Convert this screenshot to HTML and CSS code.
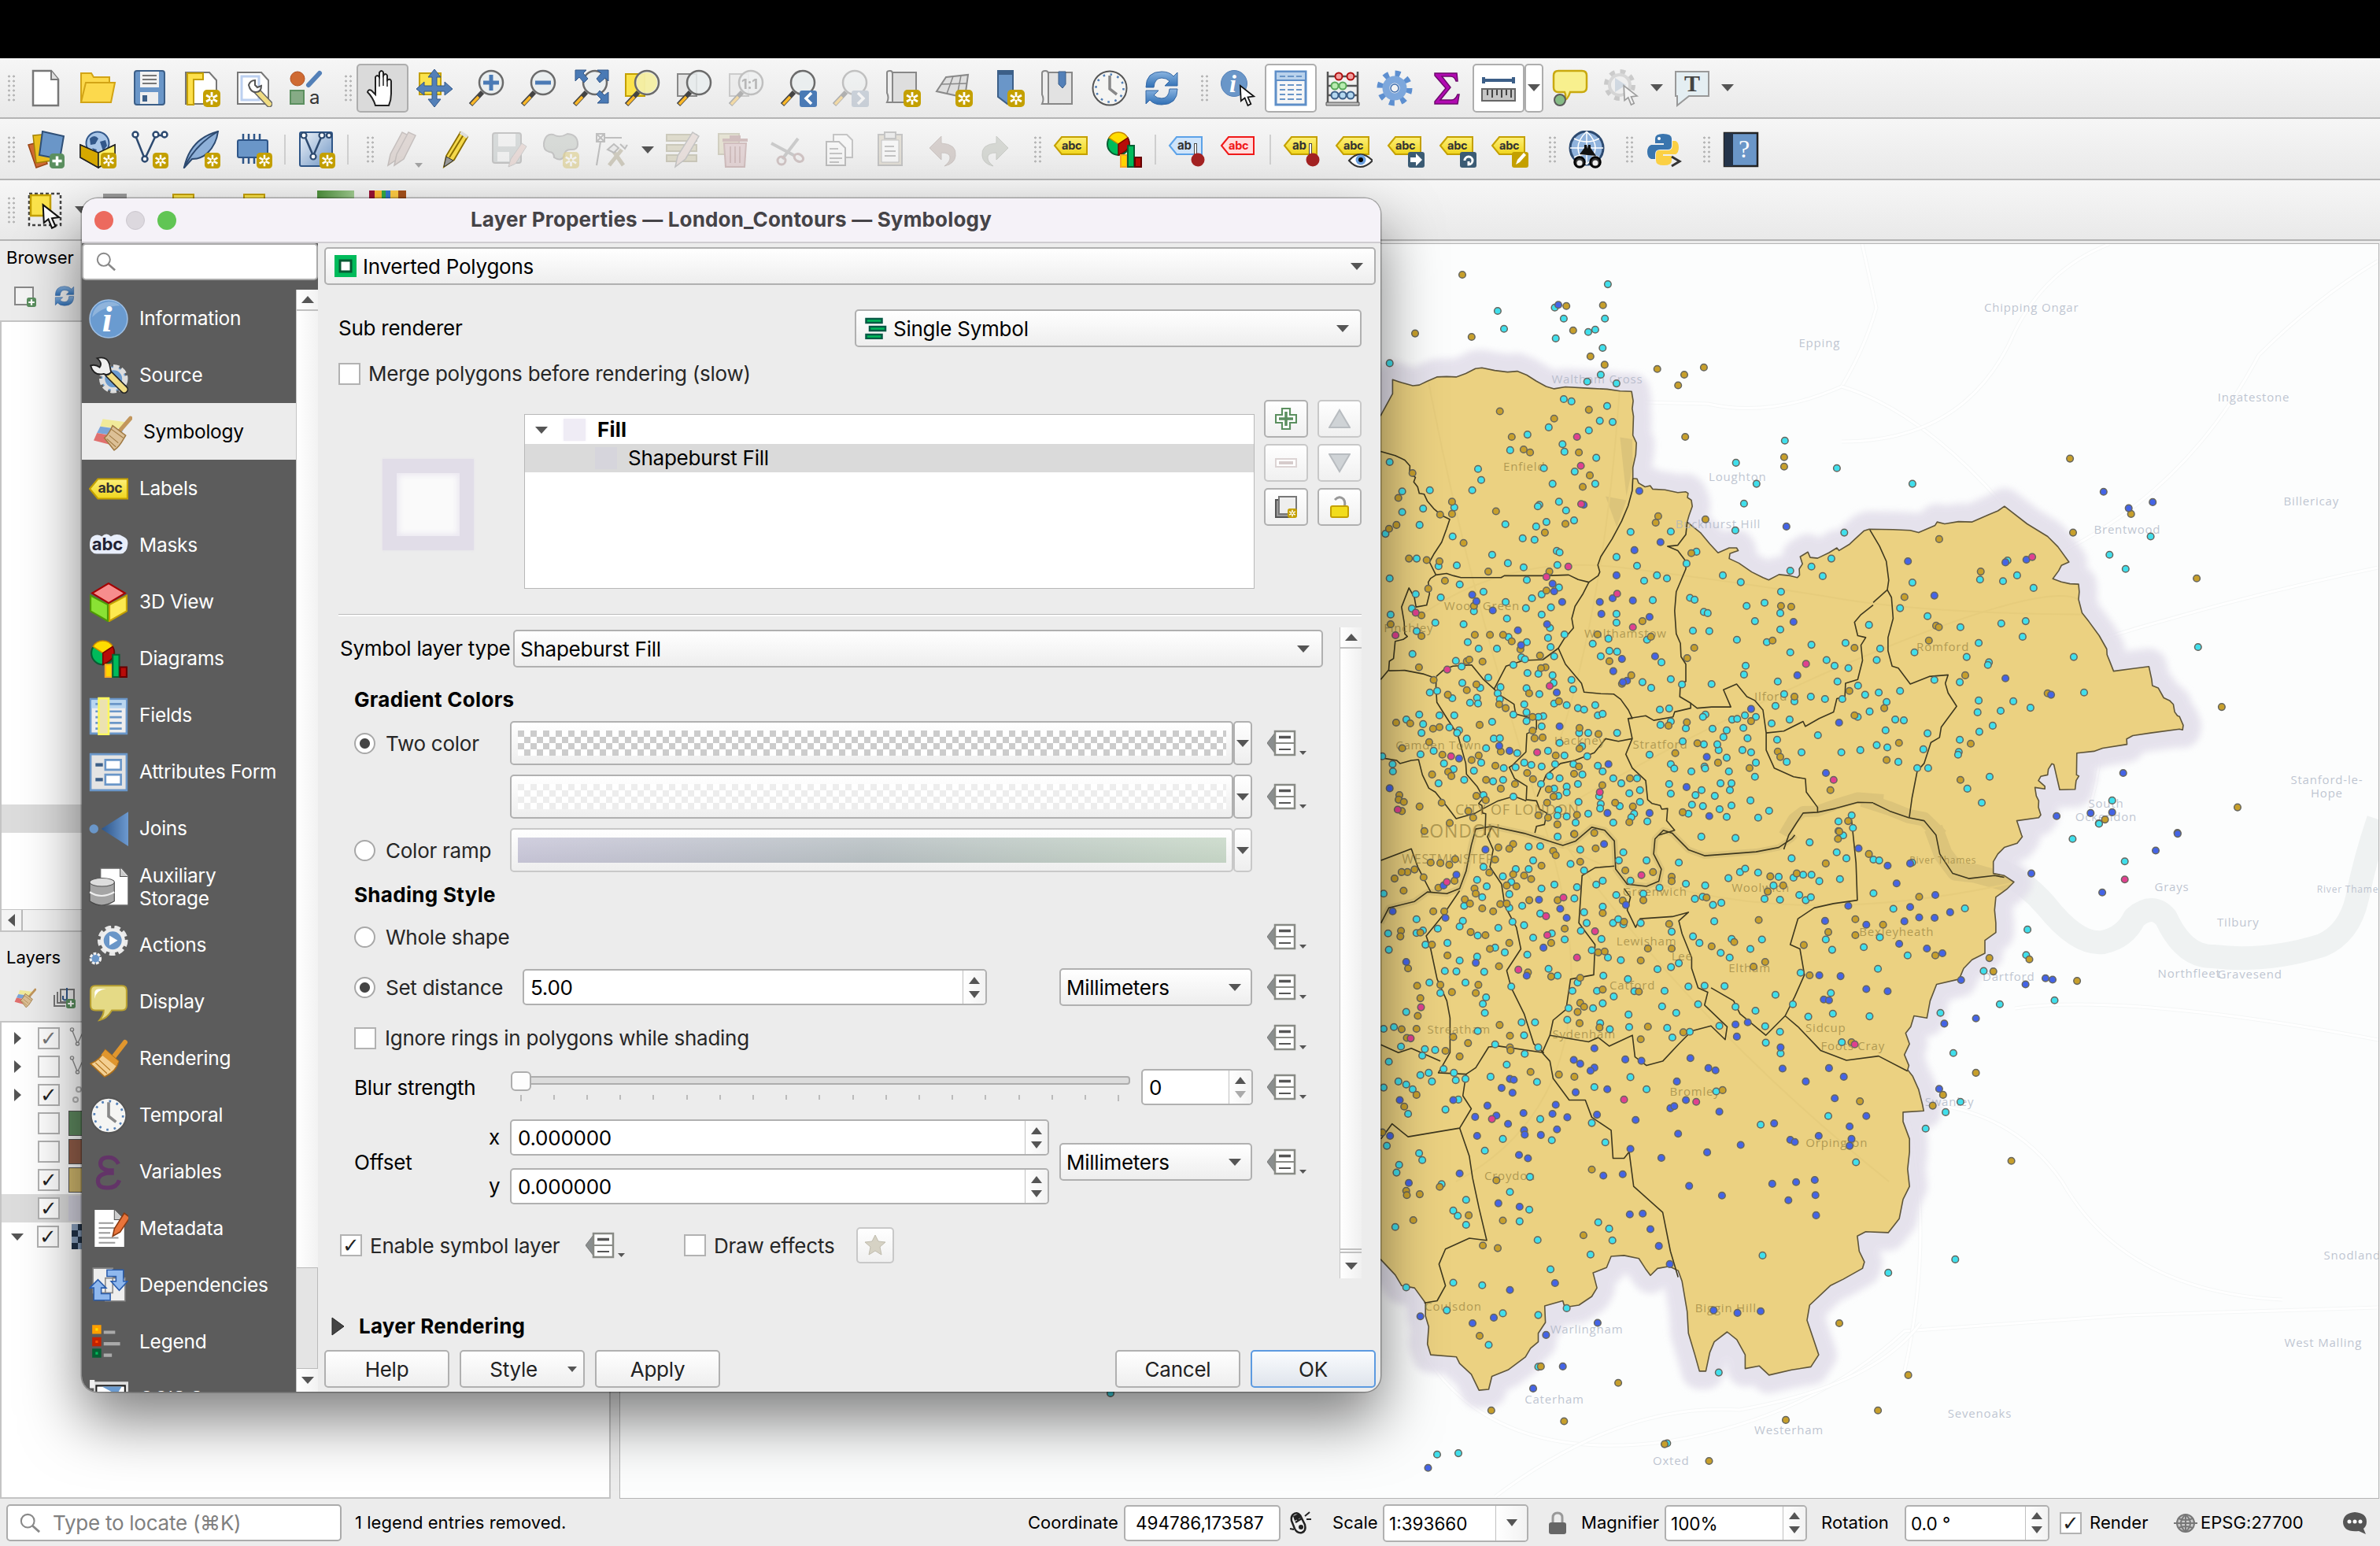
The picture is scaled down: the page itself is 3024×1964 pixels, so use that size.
FILE: index.html
```html
<!DOCTYPE html>
<html lang="en">
<head>
<meta charset="utf-8">
<title>Layer Properties — London_Contours — Symbology</title>
<link rel="stylesheet" href="styles.css">
</head>
<body>
<svg class="defs" width="0" height="0">
  <defs>
    <linearGradient id="gYel" x2="0" y2="1"><stop stop-color="#fdf07a"/><stop offset="1" stop-color="#f0d51c"/></linearGradient>
    <linearGradient id="gBlu" x2="0" y2="1"><stop stop-color="#8ab4e0"/><stop offset="1" stop-color="#2f6fb5"/></linearGradient>
    <linearGradient id="gPale" x2="1" y2="1"><stop stop-color="#eef3f9"/><stop offset="1" stop-color="#6e95c4"/></linearGradient>
    <linearGradient id="gJoin"><stop stop-color="#2c5488"/><stop offset="1" stop-color="#6d9ad0"/></linearGradient>
  </defs>
</svg>
<svg class="sprites">
  <symbol id="badge" viewBox="0 0 22 22"><rect width="22" height="22" rx="5" fill="#c4a000"/><path d="M11 3v16M4 7l14 8M4 15l14-8" stroke="#fff" stroke-width="2.800"/><circle cx="11" cy="11" r="2" fill="#c4a000"/></symbol>
  <symbol id="plusb" viewBox="0 0 22 22"><rect width="22" height="22" rx="5" fill="#5b8f5f"/><path d="M11 4v14M4 11h14" stroke="#fff" stroke-width="4"/></symbol>
  <symbol id="lens" viewBox="0 0 48 48"><path d="M19 29L4 45" stroke="#444" stroke-width="6"/><path d="M14 35L5 44.500" stroke="#fbb829" stroke-width="3.500"/><circle cx="30" cy="17" r="15" fill="#e9edee" fill-opacity=".85" stroke="#6b6b6b" stroke-width="2.500"/></symbol>
  <symbol id="new" viewBox="0 0 48 48"><path d="M8 2h23l9 11v33H8z" fill="#fff" stroke="#777" stroke-width="2.500"/><path d="M31 2v11h9" fill="#ddd" stroke="#777" stroke-width="2"/></symbol>
  <symbol id="open" viewBox="0 0 48 48"><path d="M3 42V5h13l3 5h20v9" fill="#fcd94c" stroke="#d2a416" stroke-width="2"/><path d="M3 42L9 17h37l-5 25z" fill="#fcd94c" stroke="#d2a416" stroke-width="2"/></symbol>
  <symbol id="save" viewBox="0 0 48 48"><rect x="5" y="2" width="38" height="43" rx="3" fill="#6a96c8" stroke="#3c5f88" stroke-width="2"/><path d="M12 3h24v20H12z" fill="#f2f2f2"/><path d="M15 8h18M15 13h18M15 18h18" stroke="#777" stroke-width="2"/><path d="M12 29h23v15H12z" fill="#eee"/><path d="M15 33h6v8h-6z" fill="#3c5f88"/></symbol>
  <symbol id="layout" viewBox="0 0 48 48"><path d="M4 4h30l9 10v30H4z" fill="#fff" stroke="#777" stroke-width="2"/><path d="M6 5h20v8H14v32H6z" fill="#fde04c" stroke="#c4a000" stroke-width="2"/><use href="#badge" x="26" y="26" width="22" height="22"/></symbol>
  <symbol id="layman" viewBox="0 0 48 48"><path d="M4 4h30l9 10v30H4z" fill="#fff" stroke="#777" stroke-width="2"/><path d="M9 9h22v30H9z" fill="none" stroke="#bcd0f0" stroke-width="3"/><path d="M26 25L44 44" stroke="#666" stroke-width="9" stroke-linecap="round"/><path d="M28 27L44 44" stroke="#f0dc82" stroke-width="6" stroke-linecap="round"/><path d="M18 20q2-6 8-6v6l3 3 5-2q0 8-7 8t-9-9z" fill="#fff" stroke="#555" stroke-width="2"/></symbol>
  <symbol id="style" viewBox="0 0 48 48"><circle cx="14" cy="12" r="9" fill="#cf6a32" stroke="#b05020"/><path d="M28 20L42 5" stroke="#5380b8" stroke-width="6" stroke-linecap="round"/><path d="M5 27h17v17H5z" fill="#86ab86" stroke="#5b8f5f" stroke-width="2"/><text x="29" y="44" font-size="24" fill="#333">a</text></symbol>
  <symbol id="hand" viewBox="0 0 48 48"><path d="M15 46q-3-10-10-17 1-4 5-2l5 5V10q2-4 5 0V4q3-4 5 0v4q3-4 5 0v6q4-3 5 1v16q0 8-3 15z" fill="#fff" stroke="#222" stroke-width="2"/><path d="M20 10v12M25 8v13M30 11v11" stroke="#222" stroke-width="1.500"/></symbol>
  <symbol id="panall" viewBox="0 0 48 48"><path d="M5 5h27v27H5z" fill="#fbe34b" stroke="#c4a000" stroke-width="2"/><path d="M24 0l8 10h-5v11h10v-5l10 9-10 8v-5H27v10h5l-8 10-8-10h5V28H11v5L1 25l10-9v5h10V10h-5z" fill="#5380b8" stroke="#33588a"/></symbol>
  <symbol id="zin" viewBox="0 0 48 48"><use href="#lens"/><path d="M30 7v20M20 17h20" stroke="#4a7ab5" stroke-width="5"/></symbol>
  <symbol id="zout" viewBox="0 0 48 48"><use href="#lens"/><path d="M20 17h20" stroke="#4a7ab5" stroke-width="5"/></symbol>
  <symbol id="zfull" viewBox="0 0 48 48"><use href="#lens"/><path d="M5 1h14l-4 4 6 7-5 5-6-7-5 5zM47 1v14l-4-4-7 6-4-5 6-7-5-4zM47 43V29l-5 4-6-6-4 5 6 6-5 5z" fill="#4a7ab5" stroke="#33588a"/></symbol>
  <symbol id="zsel" viewBox="0 0 48 48"><path d="M3 6h24v28H3z" fill="#fbe34b" stroke="#c4a000" stroke-width="2"/><use href="#lens"/><circle cx="30" cy="17" r="13" fill="#f8ef8c" fill-opacity=".7"/></symbol>
  <symbol id="zlay" viewBox="0 0 48 48"><path d="M3 6h24v28H3z" fill="#e4e4e4" stroke="#888" stroke-width="2"/><use href="#lens"/></symbol>
  <symbol id="z11" viewBox="0 0 48 48"><use href="#zlay"/><text x="18" y="25" font-size="18" font-weight="700" fill="#555">1:1</text></symbol>
  <symbol id="zlast" viewBox="0 0 48 48"><use href="#lens"/><rect x="26" y="27" width="22" height="21" rx="3" fill="#4a7ab5"/><path d="M41 30l-7 7 7 7" fill="none" stroke="#fff" stroke-width="3.500"/></symbol>
  <symbol id="znext" viewBox="0 0 48 48"><use href="#lens"/><rect x="26" y="27" width="22" height="21" rx="3" fill="#8a9cb2"/><path d="M34 30l7 7-7 7" fill="none" stroke="#fff" stroke-width="3.500"/></symbol>
  <symbol id="mapv" viewBox="0 0 48 48"><path d="M12 4h30v38H12z" fill="#dedede" stroke="#888" stroke-width="2"/><path d="M12 42H5q3-6 0-12V4q0-2 4-2 3 0 3 4z" fill="#eee" stroke="#888" stroke-width="2"/><use href="#badge" x="26" y="26" width="22" height="22"/></symbol>
  <symbol id="map3" viewBox="0 0 48 48"><path d="M14 10l28-3-4 29-36-8z" fill="#dedede" stroke="#888" stroke-width="2"/><path d="M8 19l33-1M23 9l-8 22M33 8l-5 26" stroke="#888" stroke-width="1.500"/><use href="#badge" x="26" y="26" width="22" height="22"/></symbol>
  <symbol id="bmnew" viewBox="0 0 48 48"><path d="M14 2h19v33l-7 9-12-9z" fill="#6a96c8" stroke="#3c5f88" stroke-width="2"/><path d="M14 2h19v5H14z" fill="#3c5f88"/><use href="#badge" x="26" y="26" width="22" height="22"/></symbol>
  <symbol id="bm" viewBox="0 0 48 48"><path d="M12 4h30v40H12z" fill="#e2e2e2" stroke="#888" stroke-width="2"/><path d="M12 44H4q3-6 0-12V5q0-3 4-3 4 0 4 4z" fill="#eee" stroke="#888" stroke-width="2"/><path d="M25 3h9v16l-4 5-5-5z" fill="#5380b8" stroke="#3c5f88"/></symbol>
  <symbol id="clock" viewBox="0 0 48 48"><circle cx="24" cy="24" r="21.500" fill="#f5f5f3" stroke="#555" stroke-width="2"/><circle cx="24" cy="24" r="17.500" fill="none" stroke="#5380b8" stroke-width="2.600" stroke-dasharray="2.600 6.560"/><path d="M24 8v17l9 7" fill="none" stroke="#888" stroke-width="3.500"/></symbol>
  <symbol id="refresh" viewBox="0 0 48 48"><path d="M4 23Q4 3 24 3q10 0 15 6l5-5v17H28l6-6q-4-4-10-4-9 0-10 12z" fill="url(#gBlu)" stroke="#3568a5"/><path d="M44 25q0 20-20 20-10 0-15-6l-5 5V27h16l-6 6q4 4 10 4 9 0 10-12z" fill="url(#gBlu)" stroke="#3568a5"/></symbol>
  <symbol id="cursor" viewBox="0 0 24 30"><path d="M2 2l1 20 5-4 4 10 4-2-4-9 8-1z" fill="#fff" stroke="#111" stroke-width="1.800"/></symbol>
  <symbol id="ident" viewBox="0 0 48 48"><circle cx="18" cy="18" r="16.500" fill="#6a96c8" stroke="#5380b8"/><text x="12" y="29" font-family="Liberation Serif" font-style="italic" font-weight="700" font-size="32" fill="#fff">i</text><use href="#cursor" x="23" y="19" width="25" height="29"/></symbol>
  <symbol id="table" viewBox="0 0 48 48"><path d="M5 3h38v42H5z" fill="#f6f6f6" stroke="#5f8fc8" stroke-width="3"/><path d="M6 4h36v10H6z" fill="#b9d2ec"/><path d="M5 14h38" stroke="#5f8fc8" stroke-width="2"/><path d="M10 9h7m3 0h8m3 0h7M10 20h7m3 0h8m3 0h7M10 26h7m3 0h8m3 0h7M10 32h7m3 0h8m3 0h7M10 38h7m3 0h8m3 0h7" stroke="#6a96c8" stroke-width="2.200"/></symbol>
  <symbol id="abac" viewBox="0 0 48 48"><path d="M5 3v39M43 3v39M5 9h38M5 21h38M5 33h38" stroke="#555" stroke-width="2.500"/><path d="M3 42h42v4H3z" fill="#bbb" stroke="#555"/><g stroke-width="2"><g fill="#f4a0a0" stroke="#b01010"><circle cx="19" cy="9" r="4.500"/><circle cx="34" cy="9" r="4.500"/></g><g fill="#b9ecb0" stroke="#58a858"><circle cx="14" cy="21" r="4.500"/><circle cx="24" cy="21" r="4.500"/></g><g fill="#b5d8f0" stroke="#3c5f88"><circle cx="14" cy="33" r="4.500"/><circle cx="24" cy="33" r="4.500"/><circle cx="34" cy="33" r="4.500"/></g></g></symbol>
  <symbol id="gear" viewBox="0 0 48 48"><circle cx="24" cy="24" r="17" fill="none" stroke="#5d8fd0" stroke-width="11" stroke-dasharray="6 7.350"/><circle cx="24" cy="24" r="11" fill="#f2f2f2" stroke="#7da7dc" stroke-width="9"/><circle cx="24" cy="24" r="5" fill="#f2f2f2" stroke="#3d6eb0" stroke-width="1.500"/></symbol>
  <symbol id="sigma" viewBox="0 0 48 48"><path d="M9 5h28l1 10h-2q-2-6-7-6H18l11 14-13 16h14q5 0 8-7h2l-2 12H9v-3l14-17L9 8z" fill="#b20ab2" stroke="#6d0a6d" stroke-width="1.500"/></symbol>
  <symbol id="ruler" viewBox="0 0 48 48"><path d="M5 14h38M5 10v8M43 10v8" stroke="#3c5f88" stroke-width="4"/><path d="M3 25h42v15H3z" fill="#c6c6c6" stroke="#666" stroke-width="2"/><path d="M10 26v7m6-7v10m6-10v7m6-7v10m6-10v7m6-7v10" stroke="#444" stroke-width="2"/></symbol>
  <symbol id="tip" viewBox="0 0 48 48"><path d="M10 2h30q6 0 6 6v15q0 6-6 6H25q-3 10-9 11 5-5 2-11h-8q-6 0-6-6V8q0-6 6-6z" fill="#f8f08e" stroke="#c9a90f" stroke-width="2.500"/><circle cx="12" cy="39" r="7" fill="#86bb86" stroke="#5a5a5a" stroke-width="2"/></symbol>
  <symbol id="gplay" viewBox="0 0 48 48"><circle cx="22" cy="20" r="17" fill="none" stroke="#888" stroke-width="6" stroke-dasharray="6.600 6.750"/><circle cx="22" cy="20" r="13" fill="#eee" stroke="#aaa" stroke-width="4"/><path d="M16 11l14 9-14 9z" fill="#9ab0c8"/><use href="#cursor" x="25" y="19" width="23" height="28"/></symbol>
  <symbol id="tann" viewBox="0 0 48 48"><path d="M3 3h42v31H20L5 46V34H3z" fill="#e4eef2" stroke="#999" stroke-width="2"/><text x="14" y="28" font-family="Liberation Serif" font-weight="700" font-size="30" fill="#444">T</text></symbol>
  <symbol id="dsman" viewBox="0 0 48 48"><path d="M2 18l16-4 8 28-14 5z" fill="#cf6a32" stroke="#9a4515" stroke-width="1.500"/><path d="M8 6l22-2 2 34-20 3z" fill="#e8be1e" stroke="#a07f06" stroke-width="1.500"/><path d="M20 1l27 6-5 29-26-5z" fill="#6a96c8" stroke="#2f4f76" stroke-width="2"/><use href="#plusb" x="29" y="29" width="19" height="19"/></symbol>
  <symbol id="gpkg" viewBox="0 0 48 48"><path d="M2 18l23 10v19L2 34z" fill="#d6a800" stroke="#222" stroke-width="1.500"/><path d="M46 18L25 28v19l21-13z" fill="#fff06a" stroke="#222" stroke-width="1.500"/><circle cx="24" cy="16" r="14.500" fill="#a9c6e8" stroke="#33588a" stroke-width="2"/><path d="M14 10q6-6 11 0l-4 7-6 1zM27 14l7-2 2 7-5 7zM17 22l6 2-2 5z" fill="#33588a"/><path d="M2 18l23 10v19L2 34z" fill="#d6a800" stroke="#222" stroke-width="1.500"/><path d="M46 18L25 28v19l21-13z" fill="#fff06a" stroke="#222" stroke-width="1.500"/><use href="#badge" x="28" y="28" width="20" height="20"/></symbol>
  <symbol id="vnew" viewBox="0 0 48 48"><path d="M6 6l12 30L32 6h10" fill="none" stroke="#2d4a70" stroke-width="2.500"/><g fill="#fff" stroke="#2d4a70" stroke-width="2.500"><circle cx="6" cy="5" r="3.500"/><circle cx="18" cy="36" r="3.500"/><circle cx="32" cy="5" r="3.500"/><circle cx="43" cy="5" r="3.500"/></g></symbol>
  <symbol id="vn" viewBox="0 0 48 48"><use href="#vnew"/><use href="#badge" x="28" y="28" width="20" height="20"/></symbol>
  <symbol id="feather" viewBox="0 0 48 48"><path d="M2 47Q10 10 45 1q-2 16-13 27-8 8-20 8z" fill="#8eb0d8" stroke="#2d4a70" stroke-width="2"/><path d="M2 47Q16 18 45 1" fill="none" stroke="#2d4a70" stroke-width="2"/><use href="#badge" x="28" y="28" width="20" height="20"/></symbol>
  <symbol id="chip" viewBox="0 0 48 48"><path d="M11 4v38M18 4v38M25 4v38M32 4v38" stroke="#2f5688" stroke-width="2.500"/><rect x="4" y="12" width="38" height="22" rx="2" fill="#6a96c8" stroke="#2f5688" stroke-width="2"/><use href="#badge" x="28" y="28" width="20" height="20"/></symbol>
  <symbol id="virt" viewBox="0 0 48 48"><rect x="3" y="2" width="41" height="43" rx="2" fill="url(#gPale)" stroke="#2f5688" stroke-width="2"/><path d="M8 4l12 28L32 4M40 4v4" fill="none" stroke="#2d4a70" stroke-width="2.500"/><g fill="#fff" stroke="#2d4a70" stroke-width="2.200"><circle cx="8" cy="6" r="3.500"/><circle cx="20" cy="33" r="3.500"/><circle cx="31" cy="6" r="3.500"/><circle cx="40" cy="6" r="3"/></g><use href="#badge" x="28" y="28" width="20" height="20"/></symbol>
  <symbol id="pencil" viewBox="0 0 48 48"><path d="M8 46l3-14L29 2l9 6-17 29z" fill="#f5d94b" stroke="#8a6d00" stroke-width="1.800"/><path d="M15 34L33 5" stroke="#8a6d00" stroke-width="2"/><path d="M8 46l3-13 9 5z" fill="#999" stroke="#333"/><path d="M29 2l9 6" stroke="#ddd" stroke-width="4"/></symbol>
  <symbol id="pencils" viewBox="0 0 48 48"><g fill="#c0aaa2" stroke="#7a6a66" stroke-width="1.500"><path d="M3 44l3-14L21 2l8 4-14 30z"/><path d="M11 44l3-14L29 2l9 4-15 30z"/></g><path d="M37 41h10l-5 6z" fill="#222"/></symbol>
  <symbol id="saved" viewBox="0 0 48 48"><rect x="4" y="3" width="36" height="38" rx="3" fill="#a9b2b2" stroke="#777" stroke-width="2"/><path d="M11 4h22v16H11zM10 27h15v12H10z" fill="#eee"/><path d="M24 46l3-10 14-20 6 4-14 22z" fill="#d8b4ac" stroke="#888"/></symbol>
  <symbol id="poly" viewBox="0 0 48 48"><path d="M3 16Q5 3 15 5q8 5 18-1 13 1 13 13 0 8-9 7-8 0-8 8-4 8-13 2 0-7-6-7-8-2-7-11z" fill="#aab2aa" stroke="#777" stroke-width="2"/><g opacity=".7"><use href="#badge" x="27" y="27" width="21" height="21"/></g></symbol>
  <symbol id="vert" viewBox="0 0 48 48"><path d="M4 4h10v10H4zM4 4l10 10M14 4L4 14M14 9h22M9 14L4 44" fill="none" stroke="#666" stroke-width="2"/><path d="M20 44l16-20M38 44L24 24" stroke="#958a68" stroke-width="5"/><path d="M18 24l8-7 6 5-6 6zM34 17l6 6 3-5" fill="#ddd" stroke="#666" stroke-width="2"/></symbol>
  <symbol id="mod" viewBox="0 0 48 48"><path d="M3 5h38v8H3zM3 18h38v8H3zM3 31h38v8H3z" fill="#bdb58c" stroke="#8a845e" stroke-width="2"/><path d="M14 46l3-14L36 2l8 5-17 29z" fill="#d8c0b8" stroke="#777" stroke-width="1.500"/></symbol>
  <symbol id="trash" viewBox="0 0 48 48"><path d="M3 4h26v26H3z" fill="#cfc79e" stroke="#9a946e" stroke-width="2"/><path d="M10 16h28l-2 30H12z" fill="#cba2a6" stroke="#966" stroke-width="2"/><path d="M8 12h32M17 8h14" stroke="#966" stroke-width="4"/><path d="M18 20v21m6-21v21m6-21v21" stroke="#966" stroke-width="2"/></symbol>
  <symbol id="cut" viewBox="0 0 48 48"><path d="M4 16l30 16M38 10L18 36" stroke="#888" stroke-width="4"/><ellipse cx="39" cy="34" rx="6" ry="4.500" transform="rotate(30 38 34)" fill="none" stroke="#977" stroke-width="3"/><ellipse cx="17" cy="38" rx="5" ry="5" fill="none" stroke="#977" stroke-width="3"/></symbol>
  <symbol id="copy" viewBox="0 0 48 48"><path d="M17 5h17l7 7v22H17z" fill="#fff" stroke="#777" stroke-width="2"/><path d="M8 14h16l8 8v22H8z" fill="#fff" stroke="#666" stroke-width="2"/><path d="M12 23h11M12 29h16M12 35h16M12 40h12" stroke="#777" stroke-width="2"/></symbol>
  <symbol id="paste" viewBox="0 0 48 48"><path d="M8 5h30v39H8z" fill="#c9bfa8" stroke="#777" stroke-width="2"/><path d="M12 12h22v28H12z" fill="#fff" stroke="#777"/><path d="M16 2h14v8H16z" fill="#ddd" stroke="#777" stroke-width="2"/><path d="M16 20h12M16 26h14M16 32h14" stroke="#777" stroke-width="2"/></symbol>
  <symbol id="undo" viewBox="0 0 48 48"><path d="M7 22L22 7v9q20 1 18 16-1 10-14 13 8-6 7-12-1-5-11-5v9z" fill="#a8958e" stroke="#8a7872"/></symbol>
  <symbol id="redo" viewBox="0 0 48 48"><path d="M41 22L26 7v9Q6 17 8 32q1 10 14 13-8-6-7-12 1-5 11-5v9z" fill="#a6aca0" stroke="#868c80"/></symbol>
  <symbol id="lab" viewBox="0 0 48 48"><path d="M2 19L11 8h32v22H11z" fill="url(#gYel)" stroke="#c4a000" stroke-width="2"/><text x="11" y="24" font-size="14.500" font-weight="700" fill="#333">abc</text></symbol>
  <symbol id="labb" viewBox="0 0 48 48"><path d="M2 19L11 8h32v22H11z" fill="#cfe4fa" stroke="#5ca2e8" stroke-width="2"/><text x="12" y="24" font-size="15" font-weight="700" fill="#333">ab</text><path d="M35 16v16" stroke="#444" stroke-width="4"/><path d="M35 17v14" stroke="#fff" stroke-width="2"/><circle cx="38" cy="37" r="8.500" fill="#a32222"/></symbol>
  <symbol id="labr" viewBox="0 0 48 48"><path d="M2 19L11 8h32v22H11z" fill="#fdd" stroke="#f01818" stroke-width="2"/><text x="11" y="24" font-size="14.500" font-weight="700" fill="#f01818">abc</text></symbol>
  <symbol id="labpin" viewBox="0 0 48 48"><path d="M2 19L11 8h32v22H11z" fill="url(#gYel)" stroke="#c4a000" stroke-width="2"/><text x="12" y="24" font-size="15" font-weight="700" fill="#333">ab</text><path d="M35 16v16" stroke="#444" stroke-width="4"/><path d="M35 17v14" stroke="#fff" stroke-width="2"/><circle cx="38" cy="37" r="8.500" fill="#a32222"/></symbol>
  <symbol id="labeye" viewBox="0 0 48 48"><use href="#lab"/><path d="M18 38q14-16 30 0-16 16-30 0z" fill="#fff" stroke="#333" stroke-width="2"/><circle cx="33" cy="37" r="6.500" fill="#6aa0e0"/><circle cx="33" cy="37" r="3" fill="#000"/></symbol>
  <symbol id="labmv" viewBox="0 0 48 48"><use href="#lab"/><rect x="27" y="27" width="21" height="20" rx="3" fill="#3b5b74"/><path d="M30 34h7v-5l8 8-8 8v-5h-7z" fill="#fff"/></symbol>
  <symbol id="labrot" viewBox="0 0 48 48"><use href="#lab"/><rect x="27" y="27" width="21" height="20" rx="3" fill="#3b5b74"/><path d="M33 38a5 5 0 1 1 5 5v-4" fill="none" stroke="#fff" stroke-width="3"/></symbol>
  <symbol id="labed" viewBox="0 0 48 48"><use href="#lab"/><rect x="27" y="27" width="21" height="20" rx="3" fill="#c4a000"/><path d="M32 43l2-6 8-9 3 3-8 9z" fill="#fff"/></symbol>
  <symbol id="diag" viewBox="0 0 48 48"><circle cx="17" cy="17" r="14" fill="#00bb5b" stroke="#065f33" stroke-width="2"/><path d="M17 17L5 9q4-7 12-7t12 7z" fill="#ffdd00" stroke="#c98a00" stroke-width="1.500"/><path d="M17 17l12-8q7 14-12 22z" fill="#b80c09" stroke="#700" stroke-width="1.500"/><path d="M20 31h8v15h-8z" fill="#ffd400" stroke="#f9a825" stroke-width="2"/><path d="M29 19h8v27h-8z" fill="#00bb5b" stroke="#065f33" stroke-width="2"/><path d="M38 34h8v12h-8z" fill="#b80c09" stroke="#600" stroke-width="2"/></symbol>
  <symbol id="globe" viewBox="0 0 48 48"><circle cx="24" cy="22" r="21" fill="#8fb2dc" stroke="#2d4a70" stroke-width="3"/><path d="M3 22h42M24 1v42M8 10q16 8 32 0M8 34q16-8 32 0M24 1q-22 21 0 42M24 1q22 21 0 42" fill="none" stroke="#fff" stroke-width="1.500"/><path d="M15 30l6-8v-4h3l1 5 1-5h3v4l7 10z" fill="#111"/><circle cx="15" cy="40" r="6.500" fill="#333" stroke="#000" stroke-width="2.500"/><circle cx="35" cy="40" r="6.500" fill="#333" stroke="#000" stroke-width="2.500"/><circle cx="15" cy="41" r="3.500" fill="#eee"/><circle cx="35" cy="41" r="3.500" fill="#eee"/></symbol>
  <symbol id="py" viewBox="0 0 48 48"><path d="M23 4q-10 0-10 6v6h11v2H8q-5 2-5 9t5 9h5v-6q0-6 6-6h10q5 0 5-5v-9q0-6-11-6z" fill="#3a75ae"/><path d="M24 44q10 0 10-6v-6H23v-2h16q4-2 4-9 0-6-4-8h-4v6q0 6-6 6H18q-4 0-4 5v8q0 6 10 6z" fill="#fbd044"/><circle cx="18" cy="10" r="2" fill="#fff"/><path d="M34 33l10 6-10 6" fill="none" stroke="#333" stroke-width="3"/></symbol>
  <symbol id="book" viewBox="0 0 48 48"><path d="M3 3h42v42H3z" fill="#6a96c8" stroke="#222" stroke-width="2.500"/><path d="M3 3h11v42H3z" fill="#24344a"/><text x="21" y="34" font-family="Liberation Serif" font-size="32" fill="#fff">?</text></symbol>
  <symbol id="selr" viewBox="0 0 48 48"><path d="M3 3h40v40H3z" fill="none" stroke="#444" stroke-width="2.500" stroke-dasharray="4 3"/><path d="M5 5h25v26H5z" fill="#fbe34b" stroke="#c4a000" stroke-width="2.500"/><use href="#cursor" x="17" y="15" width="30" height="34"/></symbol>
  <symbol id="info" viewBox="0 0 48 48"><circle cx="24" cy="24" r="23" fill="#6a9bd0" stroke="#9ebfe4" stroke-width="1.500"/><path d="M4 22Q6 5 24 3q10 0 14 5Q18 8 4 22z" fill="#fff" fill-opacity=".25"/><text x="16" y="39" font-family="Liberation Serif" font-style="italic" font-weight="700" font-size="44" fill="#fff">i</text></symbol>
  <symbol id="src" viewBox="0 0 48 48"><circle cx="30" cy="28" r="15" fill="#6a9bd0" stroke="#ddd" stroke-width="5" stroke-dasharray="7 3"/><circle cx="30" cy="28" r="12" fill="#6a9bd0" stroke="#ddd" stroke-width="3"/><path d="M24 22L43 41" stroke="#222" stroke-width="10" stroke-linecap="round"/><path d="M25 23L43 41" stroke="#f0dc82" stroke-width="7" stroke-linecap="round"/><path d="M2 12q6-2 11 2 4-5-3-11 12-3 15 7 1 5 2 10-4 5-9 2-12 3-16-10z" fill="#eee" stroke="#222" stroke-width="1.800"/></symbol>
  <symbol id="symb" viewBox="0 0 48 48"><path d="M12 8l30 4-5 8L9 17z" fill="#f1ea9a"/><path d="M9 17l28 4-4 8L5 25z" fill="#7ba4d8"/><path d="M5 25l29 5-6 11L1 34z" fill="#e0706e"/><path d="M33 22L46 7" stroke="#c2965c" stroke-width="5" stroke-linecap="round"/><path d="M24 16l16 12-3 5q-5 9-11 13L14 31q6-5 10-15z" fill="#dcc096" stroke="#a07a44" stroke-width="1.500"/><path d="M22 20l15 11M17 32l11 10M20 28l11 9" stroke="#a07a44"/></symbol>
  <symbol id="blab" viewBox="0 0 48 48"><path d="M1 24l10-12h36v24H11z" fill="url(#gYel)" stroke="#c4a000" stroke-width="2"/><text x="11" y="29" font-size="17" font-weight="700" fill="#333">abc</text></symbol>
  <symbol id="mask" viewBox="-2 0 52 48"><path d="M3 12q6-4 12 0 6-6 12 0 8-5 16 0 8 3 6 12-1 10-9 11H8q-9-1-9-11 0-10 4-12z" fill="#e8eefb"/><text x="2" y="30" font-size="23" font-weight="700" fill="#223">abc</text></symbol>
  <symbol id="cube" viewBox="0 0 48 48"><path d="M24 1l20 12-20 12L4 13z" fill="#f78d8d" stroke="#a40000" stroke-width="2"/><path d="M2 16l21 11v20L2 35z" fill="#8ae234" stroke="#4e9a06" stroke-width="2"/><path d="M46 16L25 27v20l21-12z" fill="#fce94f" stroke="#c4a000" stroke-width="2"/></symbol>
  <symbol id="fields" viewBox="0 0 48 48"><path d="M2 4h44v42H2z" fill="#eee" stroke="#6a96c8" stroke-width="2.500"/><path d="M3 5h42v10H3z" fill="#b9d6f0"/><path d="M8 10h32M8 19h32M8 26h32M8 33h32M8 40h32" stroke="#6a96c8" stroke-width="2.500"/><path d="M12 3h12v44H12z" fill="#ece2b0" stroke="#fdf75e" stroke-width="2.500"/></symbol>
  <symbol id="attr" viewBox="0 0 48 48"><path d="M2 2h44v44H2z" fill="#e4e4e4" stroke="#6a96c8" stroke-width="2.500"/><path d="M8 15h9M8 33h9" stroke="#3c5f88" stroke-width="4"/><path d="M20 9h19v12H20zM20 27h19v12H20z" fill="#fff" stroke="#6a96c8" stroke-width="2.500"/></symbol>
  <symbol id="join" viewBox="0 0 48 48"><circle cx="6" cy="24" r="5.500" fill="#6a96c8"/><path d="M15 24L48 3v42z" fill="url(#gJoin)"/></symbol>
  <symbol id="aux" viewBox="0 0 48 48"><path d="M14 1h26l8 9v36H14z" fill="#fff" stroke="#666" stroke-width="1.500"/><path d="M38 1v10h9" fill="#ccc" stroke="#555"/><path d="M1 18v23q14 10 30 0V18z" fill="#a5a5a5" stroke="#444"/><ellipse cx="16" cy="18" rx="15" ry="5" fill="#ddd" stroke="#555"/><path d="M1 30q14 9 30 0" fill="none" stroke="#eee" stroke-width="2"/></symbol>
  <symbol id="act" viewBox="0 0 48 48"><circle cx="29" cy="18" r="16" fill="none" stroke="#e8e8e8" stroke-width="5" stroke-dasharray="7 4"/><circle cx="29" cy="18" r="13" fill="#6a96c8" stroke="#eee" stroke-width="4"/><path d="M25 12l10 6-10 6z" fill="#fff"/><circle cx="8" cy="40" r="6" fill="#6a96c8" stroke="#eee" stroke-width="3" stroke-dasharray="3.500 1.500"/></symbol>
  <symbol id="disp" viewBox="0 0 48 48"><path d="M8 4h32q6 0 6 6v18q0 6-6 6H28Q22 44 13 46q5-6 5-12H8q-6 0-6-6V10q0-6 6-6z" fill="#e5da86" stroke="#b8a030" stroke-width="2"/><path d="M7 20V12q1-4 6-4h8q-12 1-14 12z" fill="#fff"/></symbol>
  <symbol id="brush" viewBox="0 0 48 48"><path d="M30 22L44 4" stroke="#e0962e" stroke-width="6" stroke-linecap="round"/><path d="M20 13l16 14q-2 12-17 19L2 30q12-5 18-17z" fill="#f3cf92" stroke="#b07018" stroke-width="1.500"/><path d="M20 13l16 14-3 6-18-14z" fill="#e0962e"/><path d="M8 29l14 13M12 25l14 13" stroke="#b07018"/></symbol>
  <symbol id="eps" viewBox="0 0 48 48"><path d="M36 14q-4-8-12-8-10 0-10 8 0 6 9 8h5v3h-5q-12 2-12 10 0 9 13 8 10 0 13-9" fill="none" stroke="#633468" stroke-width="5"/></symbol>
  <symbol id="meta" viewBox="0 0 48 48"><path d="M7 1h24l12 12v33H7z" fill="#fff"/><path d="M31 1v12h12" fill="#ccc" stroke="#555"/><path d="M12 17h18M12 23h22M12 29h14M12 35h24M12 41h20" stroke="#999" stroke-width="2"/><path d="M29 33l2-9L43 5l7 5-12 18z" fill="#e8743b" stroke="#8a3a10" stroke-width="1.500"/></symbol>
  <symbol id="dep" viewBox="0 0 48 48"><path d="M5 3h24v30H5zM20 15h24v28H20z" fill="#eee" stroke="#888" stroke-width="1.500"/><path d="M22 5h20v14h5L37 30 27 19h6v-6H22z" fill="#8fb8ee" stroke="#2a5cab" stroke-width="1.500"/><path d="M26 42H6V27H1l10-10 10 10h-6v7h11z" fill="#8fb8ee" stroke="#2a5cab" stroke-width="1.500"/></symbol>
  <symbol id="leg" viewBox="0 0 48 48"><g stroke-width="4"><path d="M6 5h7v7H6z" fill="#ffdf00" stroke="#ff9f00"/><path d="M6 20h7v7H6z" fill="#ff4e00" stroke="#c42200"/><path d="M6 34h7v7H6z" fill="#00bb5b" stroke="#065f33"/></g><path d="M18 12h14M18 26h20M18 40h10" stroke="#aaa" stroke-width="4"/></symbol>
  <symbol id="qsrv" viewBox="0 0 48 48"><path d="M6 3h42v45H6z" fill="#ddd"/><path d="M9 8h35v40H9z" fill="#fff" stroke="#222" stroke-width="2"/><path d="M16 9h24l-6 10z" fill="#6a9bd0"/><path d="M1 1h6v10H1z" fill="#eee"/></symbol>
  <symbol id="ov" viewBox="0 0 54 36"><path d="M10 5L0 18l10 13z" fill="#8a8e8e" stroke="#777"/><path d="M10 3h25v30H10z" fill="#fff" stroke="#888a85" stroke-width="2.500"/><path d="M10 18h25" stroke="#888a85" stroke-width="2"/><path d="M15 10.500h15" stroke="#555" stroke-width="3.500"/><path d="M15 26h15" stroke="#555" stroke-width="2"/><path d="M41 28h9l-4.500 5z" fill="#555"/></symbol>
  <symbol id="mag" viewBox="0 0 28 28"><circle cx="11" cy="11" r="9" fill="none" stroke="#888" stroke-width="2.200"/><path d="M17.500 17.500L27 26" stroke="#888" stroke-width="3"/></symbol>
</svg>

<div class="blackbar"></div>

<div class="bar">
  <i class="grip first"></i>
  <span class="t"><svg><use href="#new"/></svg></span><span class="t"><svg><use href="#open"/></svg></span><span class="t"><svg><use href="#save"/></svg></span><span class="t"><svg><use href="#layout"/></svg></span><span class="t"><svg><use href="#layman"/></svg></span><span class="t"><svg><use href="#style"/></svg></span>
  <i class="grip"></i>
  <span class="t on"><svg><use href="#hand"/></svg></span><span class="t"><svg><use href="#panall"/></svg></span><span class="t"><svg><use href="#zin"/></svg></span><span class="t"><svg><use href="#zout"/></svg></span><span class="t"><svg><use href="#zfull"/></svg></span><span class="t"><svg><use href="#zsel"/></svg></span><span class="t"><svg><use href="#zlay"/></svg></span><span class="t off"><svg><use href="#z11"/></svg></span><span class="t"><svg><use href="#zlast"/></svg></span><span class="t off"><svg><use href="#znext"/></svg></span><span class="t"><svg><use href="#mapv"/></svg></span><span class="t"><svg><use href="#map3"/></svg></span><span class="t"><svg><use href="#bmnew"/></svg></span><span class="t"><svg><use href="#bm"/></svg></span><span class="t"><svg><use href="#clock"/></svg></span><span class="t"><svg><use href="#refresh"/></svg></span>
  <i class="grip"></i>
  <span class="t"><svg><use href="#ident"/></svg></span><span class="t lit"><svg><use href="#table"/></svg></span><span class="t"><svg><use href="#abac"/></svg></span><span class="t"><svg><use href="#gear"/></svg></span><span class="t"><svg><use href="#sigma"/></svg></span><span class="t lit"><svg><use href="#ruler"/></svg></span><span class="dd lit"><b class="dn"></b></span><span class="t"><svg><use href="#tip"/></svg></span><span class="t off"><svg><use href="#gplay"/></svg></span><span class="dd"><b class="dn"></b></span><span class="t"><svg><use href="#tann"/></svg></span><span class="dd"><b class="dn"></b></span>
</div>

<div class="bar second">
  <i class="grip first"></i>
  <span class="t"><svg><use href="#dsman"/></svg></span><span class="t"><svg><use href="#gpkg"/></svg></span><span class="t"><svg><use href="#vn"/></svg></span><span class="t"><svg><use href="#feather"/></svg></span><span class="t"><svg><use href="#chip"/></svg></span><i class="sep"></i><span class="t"><svg><use href="#virt"/></svg></span><i class="sep"></i>
  <i class="grip"></i>
  <span class="t off"><svg><use href="#pencils"/></svg></span><span class="t"><svg><use href="#pencil"/></svg></span><span class="t off"><svg><use href="#saved"/></svg></span><span class="t off"><svg><use href="#poly"/></svg></span><span class="t off"><svg><use href="#vert"/></svg></span><span class="dd"><b class="dn"></b></span><span class="t off"><svg><use href="#mod"/></svg></span><span class="t off"><svg><use href="#trash"/></svg></span><span class="t off"><svg><use href="#cut"/></svg></span><span class="t off"><svg><use href="#copy"/></svg></span><span class="t off"><svg><use href="#paste"/></svg></span><span class="t off"><svg><use href="#undo"/></svg></span><span class="t off"><svg><use href="#redo"/></svg></span>
  <i class="grip"></i>
  <span class="t"><svg><use href="#lab"/></svg></span><span class="t"><svg><use href="#diag"/></svg></span><i class="sep"></i><span class="t"><svg><use href="#labb"/></svg></span><span class="t"><svg><use href="#labr"/></svg></span><i class="sep"></i><span class="t"><svg><use href="#labpin"/></svg></span><span class="t"><svg><use href="#labeye"/></svg></span><span class="t"><svg><use href="#labmv"/></svg></span><span class="t"><svg><use href="#labrot"/></svg></span><span class="t"><svg><use href="#labed"/></svg></span>
  <i class="grip"></i><span class="t"><svg><use href="#globe"/></svg></span><i class="grip"></i><span class="t"><svg><use href="#py"/></svg></span><i class="grip"></i><span class="t"><svg><use href="#book"/></svg></span>
</div>

<div class="bar third">
  <i class="grip first"></i><span class="t"><svg><use href="#selr"/></svg></span><span class="dd"><b class="dn"></b></span>
  <i class="peek gray"></i><i class="peek yel"></i><i class="peek yel"></i><i class="peek grn"></i><i class="peek mix"></i>
</div>

<main>
  <aside class="docks">
    <h3 class="dock-title">Browser</h3>
    <div class="dock-tools"><svg viewBox="0 0 28 28"><path d="M1 3h23v22H1z" fill="#f4f4f4" stroke="#888" stroke-width="2"/><use href="#plusb" x="16" y="16" width="12" height="12"/></svg><svg><use href="#refresh"/></svg></div>
    <div class="browser-tree"><i class="selrow"></i></div>
    <div class="hscroll"><span><b class="lf"></b></span></div>
    <h3 class="dock-title layers">Layers</h3>
    <div class="dock-tools"><svg><use href="#symb"/></svg><svg viewBox="0 0 28 28"><path d="M1 11v14h14M5 7v14h14M9 4h17v16H9z" fill="none" stroke="#777" stroke-width="2"/><path d="M12 12v4q3 3 5 0V2" fill="none" stroke="#2f5688" stroke-width="2"/><use href="#plusb" x="16" y="16" width="12" height="12"/></svg></div>
    <div class="layer-tree">
      <div class="lr"><b class="rt"></b><i class="cb gray">✓</i><svg><use href="#vnew"/></svg></div>
      <div class="lr"><b class="rt"></b><i class="cb"></i><svg><use href="#vnew"/></svg></div>
      <div class="lr"><b class="rt"></b><i class="cb">✓</i><svg viewBox="0 0 28 28"><g fill="none" stroke="#888" stroke-width="2"><circle cx="8" cy="20" r="3"/><circle cx="12" cy="7" r="3"/></g></svg></div>
      <div class="lr"><b></b><i class="cb"></i><i class="sw g"></i></div>
      <div class="lr"><b></b><i class="cb"></i><i class="sw r"></i></div>
      <div class="lr"><b></b><i class="cb">✓</i><i class="sw y"></i></div>
      <div class="lr cur"><b></b><i class="cb">✓</i><i class="sw p"></i></div>
      <div class="lr"><b class="dn"></b><i class="cb">✓</i><i class="sw k"></i></div>
    </div>
  </aside>
  <svg class="map" viewBox="788 309 2234 1593" id="map"></svg>
</main>

<footer>
  <div class="locate"><svg><use href="#mag"/></svg><span>Type to locate (⌘K)</span></div>
  <span class="s msg">1 legend entries removed.</span>
  <span class="s w-coord">Coordinate</span><div class="in coord">494786,173587</div>
  <svg class="mouse" viewBox="0 0 28 30"><path d="M5 4q5-4 9 1l6 12q2 8-4 10-6 1-9-5L3 12Q2 7 5 4zM8 14l8-5M8 5l4 7" fill="#eee" stroke="#222" stroke-width="2.500"/><path d="M5 6l7-3 3 5-8 4z" fill="#222"/><circle cx="15" cy="20" r="3" fill="#222"/><path d="M20 6l6-5M22 10h6M1 22l5 1" stroke="#222" stroke-width="2"/></svg>
  <span class="s w-scale">Scale</span><div class="in scale"><span>1:393660</span><em><b class="dn"></b></em></div>
  <svg class="lock" viewBox="0 0 24 30"><path d="M6 14V8q0-6 6-6t6 6v6" fill="none" stroke="#999" stroke-width="3"/><rect x="1" y="14" width="22" height="15" rx="3" fill="#666"/></svg>
  <span class="s w-mag">Magnifier</span><div class="in mag"><span>100%</span><em class="ud"><b class="up"></b><b class="dn"></b></em></div>
  <span class="s w-rot">Rotation</span><div class="in rot"><span>0.0 °</span><em class="ud"><b class="up"></b><b class="dn"></b></em></div>
  <i class="cb">✓</i><span class="s w-ren">Render</span>
  <svg class="crs" viewBox="0 0 32 30"><circle cx="16" cy="15" r="11" fill="#ccc" stroke="#777" stroke-width="2"/><path d="M1 15h30M16 4v22M7 9q9 4 18 0M7 21q9-4 18 0M16 4q-12 11 0 22M16 4q12 11 0 22" fill="none" stroke="#777" stroke-width="2"/></svg>
  <span class="s epsg">EPSG:27700</span>
  <svg class="bub" viewBox="0 0 32 30"><path d="M16 1q15 1 15 12 0 6-4 9l3 7-9-4Q1 27 1 13 2 2 16 1z" fill="#555"/><circle cx="9" cy="13" r="2.500" fill="#fff"/><circle cx="16" cy="13" r="2.500" fill="#fff"/><circle cx="23" cy="13" r="2.500" fill="#fff"/></svg>
</footer>

<section class="dialog">
  <header><i class="tl red"></i><i class="tl mid"></i><i class="tl grn"></i><h1>Layer Properties — London_Contours — Symbology</h1></header>
  <div class="body">
    <nav>
      <div class="search"><svg><use href="#mag"/></svg></div>
      <div class="navwrap">
        <ul>
          <li><svg><use href="#info"/></svg>Information</li>
          <li><svg><use href="#src"/></svg>Source</li>
          <li class="sel"><svg><use href="#symb"/></svg>Symbology</li>
          <li><svg><use href="#blab"/></svg>Labels</li>
          <li><svg><use href="#mask"/></svg>Masks</li>
          <li><svg><use href="#cube"/></svg>3D View</li>
          <li><svg><use href="#diag"/></svg>Diagrams</li>
          <li><svg><use href="#fields"/></svg>Fields</li>
          <li><svg><use href="#attr"/></svg>Attributes Form</li>
          <li><svg><use href="#join"/></svg>Joins</li>
          <li class="tall"><svg><use href="#aux"/></svg><span>Auxiliary<br>Storage</span></li>
          <li><svg><use href="#act"/></svg>Actions</li>
          <li><svg><use href="#disp"/></svg>Display</li>
          <li><svg><use href="#brush"/></svg>Rendering</li>
          <li><svg><use href="#clock"/></svg>Temporal</li>
          <li><svg><use href="#eps"/></svg>Variables</li>
          <li><svg><use href="#meta"/></svg>Metadata</li>
          <li><svg><use href="#dep"/></svg>Dependencies</li>
          <li><svg><use href="#leg"/></svg>Legend</li>
          <li><svg><use href="#qsrv"/></svg>QGIS Server</li>
        </ul>
        <div class="vs nav-vs"><span class="cap"><b class="up"></b></span><span class="thumb"></span><span class="cap"><b class="dn"></b></span></div>
      </div>
    </nav>
    <div class="props">
      <div class="combo main"><svg viewBox="0 0 28 28"><path d="M0 0h28v28H0z" fill="#00bb5b"/><path d="M7 7h14v14H7z" fill="#fff" stroke="#065a33" stroke-width="3"/></svg><span>Inverted Polygons</span><b class="dn"></b></div>
      <div class="row sub"><span>Sub renderer</span><div class="combo subc"><svg viewBox="0 0 28 28"><g fill="#00bb5b" stroke="#065a45" stroke-width="2.500"><path d="M1.500 2h20v5h-20zM6 12h20v5H6zM1.500 22h20v5h-20z"/></g></svg><span>Single Symbol</span><b class="dn"></b></div></div>
      <div class="row merge"><i class="cb"></i><span>Merge polygons before rendering (slow)</span></div>
      <div class="symrow">
        <div class="preview"></div>
        <div class="tree"><div class="tr"><b class="dn"></b><i class="chip a"></i><strong>Fill</strong></div><div class="tr cur"><i class="chip b"></i><span>Shapeburst Fill</span></div></div>
        <div class="btns">
          <span class="btn"><svg viewBox="0 0 28 28"><path d="M9 1h10v8h8v10h-8v8H9v-8H1V9h8z" fill="#fff" stroke="#5b8f5f" stroke-width="2.200"/><path d="M14 5v18M5 14h18" stroke="#5b8f5f" stroke-width="3.500"/></svg></span>
          <span class="btn dis"><svg viewBox="0 0 28 28"><path d="M14 3l13 22H1z" fill="#cfd3d6" stroke="#b8bcc0" stroke-width="2"/></svg></span>
          <span class="btn dis"><svg viewBox="0 0 28 28"><path d="M1 9h26v10H1z" fill="#fff" stroke="#dcd4d4" stroke-width="2"/><path d="M5 14h18" stroke="#d6cccc" stroke-width="4"/></svg></span>
          <span class="btn dis"><svg viewBox="0 0 28 28"><path d="M14 25L1 3h26z" fill="#cfd3d6" stroke="#b8bcc0" stroke-width="2"/></svg></span>
          <span class="btn"><svg viewBox="0 0 28 28"><path d="M1 5h20v22H1z" fill="#999" stroke="#555" stroke-width="2"/><path d="M5 1h22v22H5z" fill="#eee" stroke="#777" stroke-width="2"/><use href="#badge" x="16" y="16" width="12" height="12"/></svg></span>
          <span class="btn"><svg viewBox="0 0 28 28"><path d="M8 5q6-6 11-1 3 4 1 10" fill="none" stroke="#999" stroke-width="3"/><rect x="3" y="13" width="22" height="14" rx="2" fill="#f2dc1c" stroke="#c4a000" stroke-width="2"/></svg></span>
        </div>
      </div>
      <hr>
      <div class="scroll">
        <div class="form">
          <div class="f type"><span class="l0">Symbol layer type</span><div class="combo typec"><span>Shapeburst Fill</span><b class="dn"></b></div></div>
          <h2 class="h-grad">Gradient Colors</h2>
          <div class="f c1"><span class="l"><i class="rb on"></i>Two color</span><div class="col"><u class="chk"></u></div><div class="cd"><b class="dn"></b></div><svg class="ov"><use href="#ov"/></svg></div>
          <div class="f c2"><span class="l"></span><div class="col"><u class="chk pale"></u></div><div class="cd"><b class="dn"></b></div><svg class="ov"><use href="#ov"/></svg></div>
          <div class="f c2"><span class="l"><i class="rb"></i>Color ramp</span><div class="col dis"><u class="ramp"></u></div><div class="cd dis"><b class="dn"></b></div></div>
          <h2 class="h-shade">Shading Style</h2>
          <div class="f whole"><span class="l"><i class="rb"></i>Whole shape</span><svg class="ov"><use href="#ov"/></svg></div>
          <div class="f dist"><span class="l"><i class="rb on"></i>Set distance</span><div class="in sp1"><span>5.00</span><em class="ud"><b class="up"></b><b class="dn"></b></em></div><div class="combo mm"><span>Millimeters</span><b class="dn"></b></div><svg class="ov"><use href="#ov"/></svg></div>
          <div class="f ign"><span class="l wide"><i class="cb"></i>Ignore rings in polygons while shading</span><svg class="ov"><use href="#ov"/></svg></div>
          <div class="f blur"><span class="l">Blur strength</span><svg class="slider" viewBox="0 0 790 46"><rect x="6" y="10" width="781" height="9" rx="3" fill="#dcdcdc" stroke="#adadad" stroke-width="2"/><rect x="2" y="4" width="24" height="23" rx="5" fill="#fdfdfd" stroke="#adadad" stroke-width="2"/><path d="M14 33v8m42-8v6m42-6v6m42-6v6m42-6v6m43-6v6m42-6v6m42-6v6m42-6v6m42-6v6m43-6v6m42-6v6m42-6v6m42-6v6m42-6v6m43-6v6m42-6v6m42-6v6m42-6v8" fill="none" stroke="#aaa" stroke-width="1.500"/></svg><div class="in sp2"><span>0</span><em class="ud"><b class="up"></b><b class="dn lt"></b></em></div><svg class="ov"><use href="#ov"/></svg></div>
          <div class="f off2"><span class="l">Offset</span><div class="xy"><div><label>x</label><div class="in sp3"><span>0.000000</span><em class="ud"><b class="up"></b><b class="dn"></b></em></div></div><div><label>y</label><div class="in sp3"><span>0.000000</span><em class="ud"><b class="up"></b><b class="dn"></b></em></div></div></div><div class="combo mm"><span>Millimeters</span><b class="dn"></b></div><svg class="ov"><use href="#ov"/></svg></div>
          <div class="f ena"><i class="cb">✓</i><span class="e1">Enable symbol layer</span><svg class="ov o2"><use href="#ov"/></svg><i class="cb"></i><span class="e2">Draw effects</span><span class="btn star dis"><svg viewBox="0 0 28 28"><path d="M14 1l4 8 9 1-7 6 2 10-8-5-8 5 2-10-7-6 9-1z" fill="#d6d2c4" stroke="#c0bcae"/></svg></span></div>
        </div>
        <div class="vs form-vs"><span class="cap"><b class="up"></b></span><span class="gap"></span><span class="cap low"><b class="dn"></b></span></div>
      </div>
      <div class="lrend"><svg viewBox="0 0 18 24"><path d="M1 1l15 11L1 23z" fill="#444" stroke="#222"/></svg><strong>Layer Rendering</strong></div>
      <div class="foot"><span class="pb">Help</span><span class="pb sty">Style<b class="dn"></b></span><span class="pb">Apply</span><span class="pb push">Cancel</span><span class="pb ok">OK</span></div>
    </div>
  </div>
</section>
<script src="map.js"></script>
</body>
</html>
```
FILE: styles.css
```css
* { box-sizing: border-box; }
body { margin: 0; width: 3024px; height: 1964px; overflow: hidden; position: relative; background: #ececec; font: 26px/1.2 Inter, "Noto Sans", sans-serif; letter-spacing: -0.25px; color: #000; display: flex; flex-direction: column; }
svg { display: block; flex: none; }
i, em { font-style: normal; }
u { text-decoration: none; }
h1, h2, h3, ul { margin: 0; padding: 0; font-size: inherit; }
strong { letter-spacing: 0.2px; }
.defs { position: absolute; }
.sprites { display: none; }

b.dn, b.up, b.rt, b.lf { flex: none; width: 0; height: 0; border: 0 solid transparent; }
b.dn { border-width: 9px 8px 0; border-top-color: #555; }
b.up { border-width: 0 8px 9px; border-bottom-color: #555; }
b.rt { border-width: 8px 0 8px 9px; border-left-color: #555; }
b.lf { border-width: 8px 9px 8px 0; border-right-color: #555; }
b.lt { border-top-color: #aaa !important; }

.blackbar { height: 74px; flex: none; background: #000; }
.bar { height: 77px; flex: none; display: flex; align-items: center; background: linear-gradient(#f6f6f6, #e9e9e9); border-bottom: 2px solid #b4b4b4; }
.bar.second { height: 78px; padding-top: 2px; }
.bar.third { height: 77px; }
.grip { flex: none; width: 32px; height: 36px; background: radial-gradient(circle, #b8b8b8 1.3px, transparent 1.8px) 15px 0 / 7px 6px repeat-y, radial-gradient(circle, #b8b8b8 1.3px, transparent 1.8px) 21px 0 / 7px 6px repeat-y; }
.grip.first { width: 25px; background-position: 8px 0, 14px 0; }
.t { flex: none; width: 66px; height: 62px; display: flex; align-items: center; justify-content: center; border: 2px solid transparent; border-radius: 5px; }
.t svg { width: 48px; height: 48px; }
.t.on { background: #dadada; border-color: #adadad; }
.lit { background: #fff; border: 2px solid #adadad !important; border-radius: 5px; }
.t.off { opacity: .36; }
.dd { flex: none; width: 24px; height: 62px; display: flex; align-items: center; justify-content: center; }
.sep { flex: none; width: 14px; height: 38px; background: linear-gradient(#cfcfcf, #cfcfcf) 6px 0 / 2px 100% no-repeat; }
.peek { height: 10px; margin-bottom: 32px; }
.peek.gray { width: 30px; margin-left: 16px; background: #999; }
.peek.yel { width: 28px; margin-left: 58px; background: #fbe34b; border: 2px solid #c4a000; }
.peek.yel + .yel { margin-left: 62px; }
.peek.grn { width: 47px; height: 18px; margin-left: 66px; background: radial-gradient(circle at 28px 20px, #eee 8px, transparent 9px), linear-gradient(100deg, #4c8f3a, #a5cf95); }
.peek.mix { width: 47px; height: 18px; margin-left: 19px; background: linear-gradient(90deg, #913 0 15%, #fb3 15% 35%, #3a4 35% 45%, #37c 45% 58%, #fc4 58% 78%, #a5501a 78%); }

main { flex: none; display: flex; height: 1598px; }
.docks { width: 776px; flex: none; display: flex; flex-direction: column; padding-top: 2px; }
.dock-title { height: 40px; padding: 6px 0 0 8px; font-size: 22px; font-weight: 400; letter-spacing: 0; }
.dock-tools { height: 59px; display: flex; gap: 22px; padding: 14px 18px; }
.dock-tools svg { width: 28px; height: 28px; }
.browser-tree { height: 749px; border: 2px solid #c4c4c4; border-bottom-width: 1px; background: #fff; padding-top: 613px; }
.selrow { display: block; height: 36px; background: #dcdcdc; }
.hscroll { height: 28px; border: 2px solid #c4c4c4; border-top: 0; background: #f4f4f4; display: flex; }
.hscroll span { width: 27px; border-right: 2px solid #bbb; display: flex; align-items: center; justify-content: center; }
.dock-title.layers { height: 55px; padding-top: 19px; }
.layer-tree { flex: 1; border: 2px solid #c4c4c4; background: #fff; margin-top: -1px; padding-top: 2px; }
.lr { height: 36px; display: flex; align-items: center; padding-left: 16px; }
.lr > b { margin-right: 21px; }
.lr > b:not([class]) { width: 9px; }
.lr > b.dn { margin: 0 17px 0 -4px; }
.lr svg { width: 28px; height: 28px; margin-left: 12px; filter: grayscale(1) opacity(.6); }
.lr.cur { background: #dcdcdc; }
.sw { width: 32px; height: 32px; margin-left: 11px; border: 1px solid #555; }
.sw.g { background: #5f8a60; } .sw.r { background: #935f4a; } .sw.y { background: #d2b96e; } .sw.p { background: #d3d2de; border: 0; }
.sw.k { margin-left: 16px; border: 0; background: conic-gradient(#22344a 25%, #8ca3c0 0 50%, #22344a 0 75%, #8ca3c0 0) 0 0 / 16px 16px; }
.cb { flex: none; display: flex; align-items: center; justify-content: center; width: 28px; height: 28px; border: 2px solid #b2b2b2; background: #fff; font: 700 26px/1 "DejaVu Sans", sans-serif; color: #222; letter-spacing: 0; }
.cb.gray { color: #777; }
.map { width: 2234px; height: 1593px; margin: 4px 0 0 12px; background: #fcfdfd; outline: 1px solid #b4b4b4; }

footer { flex: none; height: 61px; display: flex; align-items: center; padding-left: 8px; }
.locate { width: 426px; height: 47px; display: flex; align-items: center; gap: 28px; padding-left: 15px; border: 2px solid #ababab; border-radius: 5px; background: #fff; color: #808080; flex: none; }
.locate svg { width: 26px; height: 26px; }
.locate span { margin-left: -12px; }
.s { flex: none; font-size: 22px; letter-spacing: 0.05px; white-space: nowrap; }
.msg { margin-left: 17px; width: 855px; }
.w-coord { width: 122px; }
.in { flex: none; height: 46px; display: flex; align-items: center; justify-content: space-between; border: 2px solid #b0b0b0; border-radius: 5px; background: #fff; padding-left: 8px; white-space: nowrap; }
footer .in { font-size: 22.5px; letter-spacing: 0; padding-left: 6px; }
.in em { align-self: stretch; width: 29px; border-left: 1.500px solid #c0c0c0; background: linear-gradient(90deg, #fff, #f2f2f2); display: flex; flex-direction: column; align-items: center; justify-content: center; gap: 9px; border-radius: 0 4px 4px 0; }
.in b.up { border-width: 0 7px 9px; } .in b.dn { border-width: 9px 7px 0; }
footer .in.coord { width: 199px; padding-left: 13px; }
.mouse { width: 28px; height: 32px; margin-left: 11px; }
.w-scale { margin-left: 27px; width: 64px; }
.in.scale { width: 185px; height: 48px; }
.in.scale em { width: 40px; }
.lock { width: 24px; height: 30px; margin: 0 18px 0 25px; }
.w-mag { width: 106px; } .in.mag { width: 181px; }
.w-rot { margin-left: 18px; width: 106px; } .in.rot { width: 184px; margin-right: 13px; }
.w-ren { margin-left: 10px; width: 106px; }
.crs { width: 32px; height: 30px; }
.epsg { margin-left: 3px; width: 180px; }
.bub { width: 32px; height: 30px; }

.dialog { position: absolute; left: 104px; top: 252px; width: 1650px; height: 1516px; border-radius: 20px; overflow: visible; background: #ececec; box-shadow: 0 0 0 1.500px rgba(0,0,0,.28), 0 36px 76px rgba(0,0,0,.5); display: flex; flex-direction: column; }
.dialog header { height: 57px; flex: none; display: flex; align-items: center; padding-left: 16px; background: #f5f2f8; border-radius: 20px 20px 0 0; border-bottom: 2px solid #cfccd1; }
.tl { width: 24px; height: 24px; border-radius: 50%; margin-right: 16px; flex: none; }
.tl.red { background: #ec6a5e; } .tl.mid { background: #dcd8de; border: 1px solid #cbc7ce; } .tl.grn { background: #61c554; }
.dialog h1 { width: 670px; margin-left: 358px; padding-bottom: 1px; font-size: 26px; font-weight: 700; letter-spacing: 0.17px; color: #454347; white-space: nowrap; }
.body { flex: 1; display: flex; min-height: 0; }
nav { width: 300px; flex: none; display: flex; flex-direction: column; background: #5c5c5c; border-radius: 0 0 0 20px; overflow: hidden; }
.search { height: 47px; flex: none; background: #fff; border: 2px solid #aaa; border-radius: 5px; padding: 9px 16px; margin-bottom: 12px; }
.search svg { width: 25px; height: 25px; }
.navwrap { flex: 1; display: flex; min-height: 0; }
nav ul { flex: 1; list-style: none; overflow: hidden; color: #fff; font-size: 24.500px; }
nav li { height: 72px; display: flex; align-items: center; padding-left: 9px; padding-top: 1px; white-space: nowrap; line-height: 29px; }
nav li svg { width: 50px; height: 50px; margin-right: 14px; }
nav li.sel { background: #ececec; color: #000; padding-left: 14px; }
nav li.tall { height: 76px; }
.vs { width: 28px; display: flex; flex-direction: column; background: linear-gradient(90deg, #fff, #f2f2f2); border-left: 1.500px solid #c4c4c4; }
.cap { height: 27px; flex: none; display: flex; align-items: center; justify-content: center; border-bottom: 2px solid #c0c0c0; }
.thumb { margin-top: auto; height: 129px; background: #e4e4e4; border: 1.500px solid #bbb; border-left: 0; }
.thumb + .cap { border: 0; height: 29px; }

.props { flex: 1; min-width: 0; display: flex; flex-direction: column; }
.combo { flex: none; height: 48px; display: flex; align-items: center; border: 2px solid #b0b0b0; border-radius: 5px; background: linear-gradient(#fff, #eeeeee); padding: 0 14px 0 7px; white-space: nowrap; }
.combo > b { margin-left: auto; }
.combo > span, .in > span { padding-top: 1px; }
.combo svg { width: 28px; height: 28px; margin: 0 8px 0 4px; }
.combo.main { margin: 5px 6px 0 8px; }
.row { display: flex; align-items: center; justify-content: space-between; padding: 0 24px 0 26px; }
.row.sub { margin-top: 31px; height: 48px; }
.subc { width: 644px; }
.row.merge { margin-top: 20px; height: 28px; justify-content: flex-start; gap: 10px; }
.merge, .f { color: #262626; }
.f .combo, .f .in { color: #000; }
.symrow { margin-top: 19px; height: 240px; display: flex; padding-left: 80px; flex: none; }
.preview { width: 116px; height: 116px; margin: 75px 2px 0 2px; background: #fafafa; border: 18px solid #e1dde8; box-shadow: inset 0 0 7px 3px #ebe8f1, 0 0 3px #e4e1ea; }
.tree { width: 928px; height: 222px; margin: 18px 12px 0 62px; border: 1.500px solid #b8b8b8; background: #fff; padding-top: 1px; }
.tr { height: 36px; display: flex; align-items: center; padding-left: 13px; }
.tr.cur { background: #dadada; padding-left: 89px; }
.chip { width: 28px; height: 28px; background: #efecf5; margin: 0 15px 0 20px; box-shadow: 0 0 4px #f4f2f8; }
.chip.b { background: #d6d5dc; margin-left: 0; margin-right: 14px; box-shadow: none; }
.btns { display: grid; grid-template-columns: 56px 56px; grid-auto-rows: 48px; gap: 8px 12px; align-content: start; }
.btn { display: flex; align-items: center; justify-content: center; border: 2px solid #b0b0b0; border-radius: 5px; background: linear-gradient(#fff, #f0f0f0); }
.btn svg { width: 28px; height: 28px; }
.btn.dis, .dis { border-color: #c8c8c8 !important; }
hr { margin: 32px 24px 0 26px; border: 0; height: 3px; background: linear-gradient(#bcbcbc 50%, #fff 50%); flex: none; }
.scroll { height: 858px; flex: none; display: flex; padding-left: 26px; }
.form { width: 1260px; flex: none; padding: 17px 26px 0 0; }
.form-vs { margin: 14px 0 0 12px; height: 827px; background: linear-gradient(90deg, #fff, #f0f0f0); }
.form-vs .gap { flex: 1; }
.form-vs .low { height: 38px; border-top: 6px double #c0c0c0; border-bottom: 0; }
.f { display: flex; align-items: center; padding-left: 20px; white-space: nowrap; }
.l { width: 198px; flex: none; display: flex; align-items: center; padding-top: 1px; }
.l.wide { width: auto; }
.f.type { height: 48px; padding-left: 2px; color: #000; }
.l0 { width: 220px; flex: none; }
.typec { width: 1029px; padding-right: 15px; }
h2 { height: 34px; padding-left: 20px; display: flex; align-items: center; font-weight: 700; letter-spacing: 0.3px; }
.h-grad { margin-top: 24px; }
.h-shade { margin-top: 12px; }
.c1 { margin-top: 10px; height: 56px; } .c2 { margin-top: 12px; height: 56px; }
.rb { width: 27px; height: 27px; border-radius: 50%; border: 2px solid #a8a8a8; background: #fff; margin-right: 13px; flex: none; }
.rb.on { background: radial-gradient(circle, #444 6px, #fff 7px); }
.col { width: 919px; height: 56px; flex: none; border: 2px solid #b0b0b0; border-radius: 5px; background: linear-gradient(#fff, #eee); padding: 10px 8px; }
.col u { display: block; height: 32px; width: 900px; }
.chk { background: conic-gradient(#fff 25%, #ccc 0 50%, #fff 0 75%, #ccc 0) 0 0 / 16px 16px; }
.chk.pale { background: conic-gradient(#fff 25%, #ededed 0 50%, #fff 0 75%, #ededed 0) 0 0 / 16px 16px; }
.ramp { background: linear-gradient(rgba(255,255,255,.12), rgba(0,0,0,.03)), linear-gradient(90deg, #cac8da, #b9c1c4 50%, #c9d9c9); }
.cd { width: 24px; height: 56px; flex: none; border: 2px solid #b0b0b0; border-radius: 5px; background: linear-gradient(#fff, #eee); display: flex; align-items: center; justify-content: center; }
.ov { width: 54px; height: 36px; margin-left: auto; }
.whole { margin-top: 20px; height: 32px; }
.dist { margin-top: 24px; height: 48px; }
.sp1 { width: 590px; margin-left: 16px; }
.mm { width: 245px; margin-left: 92px; padding-right: 12px; }
.ign { margin-top: 24px; height: 32px; }
.ign .cb { margin-right: 11px; }
.blur { margin-top: 24px; height: 46px; color: #000; }
.slider { width: 790px; height: 46px; }
.sp2 { width: 142px; margin-left: 12px; }
.off2 { margin-top: 18px; height: 108px; color: #000; }
.off2 .l { width: 171px; }
.xy { display: flex; flex-direction: column; gap: 16px; }
.xy > div { display: flex; align-items: center; }
.xy label { width: 27px; }
.sp3 { width: 685px; }
.off2 .mm { margin-left: 13px; }
.ena { margin-top: 29px; height: 46px; padding-left: 2px; }
.e1 { margin-left: 10px; width: 274px; padding-top: 1px; }
.o2 { margin-left: 0; margin-right: 71px; }
.e2 { margin-left: 10px; width: 181px; padding-top: 1px; }
.star { width: 48px; height: 46px; }
.lrend { margin-top: 27px; height: 34px; flex: none; display: flex; align-items: center; padding-left: 17px; gap: 17px; }
.lrend svg { width: 18px; height: 24px; }
.lrend strong { letter-spacing: 0.25px; }
.foot { margin-top: 13px; height: 48px; flex: none; display: flex; gap: 13px; padding: 0 6px 0 8px; color: #222; }
.pb { width: 159px; height: 48px; display: flex; align-items: center; justify-content: center; border: 2px solid #b0b0b0; border-radius: 5px; background: linear-gradient(#fff, #eee); padding-top: 1px; }
.pb.push { margin-left: auto; }
.pb.ok { border-color: #5c9ae0; background: linear-gradient(#fafcfe, #dfe4ec); }
.pb.sty { justify-content: flex-end; padding-right: 8px; gap: 38px; }
.pb.sty b { border-width: 7px 6px 0; }
```
FILE: map.js
```js
// Survey sheets: each stores its own grid, placed on the canvas by origin and grid units per pixel.
const sheets = {
  A: [1740, 300, 2.45, 2.0632],
  B: [2340, 300, 2.2924, 2.0632],
  C: [1740, 1040, 1.2212, 1.8233]
};
const pts = (k, s) => s.trim().split(/\s+/).map(p => {
  const [x, y] = p.split(',').map(Number), g = sheets[k];
  return [+(g[0] + x / g[2]).toFixed(1), +(g[1] + y / g[3]).toFixed(1)];
});
const path = (k, s) => 'M' + pts(k, s).map(p => p.join(' ')).join('L');

const outline = [
  ...pts('A', '35,468 72,411 72,374 100,382 135,390 155,388 180,378 210,367 240,366 270,367 300,358 330,345 350,343 390,350 430,354 460,352 490,362 520,378 550,392 575,398 610,393 690,397 740,399 780,404 816,405 821,430 818,450 822,470 820,520 831,540 829,570 820,605 820,633 833,634 838,645 858,655 874,652 882,661 920,663 960,670 985,668 992,672 990,683 1002,690 1005,706 995,730 989,747 1030,775 1060,805 1085,828 1120,815 1143,815 1148,822 1135,826 1122,830 1120,843 1150,855 1190,878 1225,893 1243,899 1275,885 1310,888 1332,893 1339,886 1338,870 1348,857 1341,838 1365,826 1372,840 1395,842 1430,828 1455,815 1462,822 1495,805 1510,793 1540,770'),
  ...pts('B', '80,766 150,767 200,769 224,775 272,756 278,747 300,752 340,746 380,747 430,727 455,718 474,706 540,752 600,785 630,812 662,852 640,861 632,875 615,896 640,904 665,909 690,910 692,930 690,950 700,985 720,1008 750,1045 772,1080 773,1095 782,1115 792,1138 850,1131 895,1126 903,1160 905,1176 922,1182 938,1208 955,1215 966,1225 970,1245 978,1255 984,1257 995,1280 993,1292 984,1290 900,1300 848,1307 830,1316 831,1330 760,1340 735,1348 685,1353 684,1410 691,1413 683,1425 680,1448 635,1449 625,1410 618,1383 612,1381 602,1395 600,1410 580,1414 573,1425 592,1440 592,1447 563,1443 567,1465 574,1478 573,1495 580,1515 574,1522 510,1530 524,1568'),
  ...pts('C', '1013,40 1005,55 985,65 975,80 968,98 968,125 985,130 1000,145 990,160 972,180 970,210 972,240 972,262 955,280 955,310 935,325 922,345 915,370 880,382 870,420 865,460 845,455 840,480 832,495 838,520 830,545 837,570 835,580 843,595 852,625 858,660 860,675 828,678 828,700 838,740 838,770 835,810 838,850 828,880 822,925 805,957 770,955 757,965 760,1000 768,1025 765,1040 735,1065 715,1080 683,1125 679,1160 688,1200 697,1240 685,1268 655,1275 620,1287 605,1266 583,1272 583,1240 570,1205 555,1187 535,1210 528,1235 522,1278 512,1278 505,1240 495,1190 493,1140 485,1070 479,1045 465,1035 447,1040 436,1056 428,1040 418,1017 395,1010 375,1012 368,1038 347,1050 353,1085 345,1105 325,1125 303,1130 300,1115 272,1127 273,1165 262,1190 262,1210 250,1225 242,1245 215,1275 190,1290 185,1320 170,1322 158,1285 140,1260 135,1245 95,1240 90,1215 92,1175 87,1150 87,1120 70,1085 50,1080 40,1055 18,1020'),
  [1700, 1560], [1700, 560]
];

const thamesLine = '660,36 655,45 635,65 600,75 520,84 495,70 470,32 456,25 443,45 441,80 453,115 449,143 430,155 400,150 382,115 380,50 365,25 345,18 320,50 300,60 240,32 190,16 165,22 158,60 150,120 140,160 120,172 90,168 70,190 30,205 18,240';

const boroughs = [
  ['A', '35,562 80,573 110,585 126,600 125,620 143,630 138,642 150,655 155,672 170,674 180,692 200,712 225,730 250,740 240,765 225,800 200,832 187,852 207,886'],
  ['A', '207,886 240,882 262,888 285,893 410,893 420,888 550,888 620,886 650,898 683,905 712,888 717,878 711,860 720,838 755,792 785,745 805,705 818,665 820,633'],
  ['A', '683,905 665,935 640,968 630,1000 635,1025 605,1055 588,1078 610,1120 660,1170 668,1193 720,1197 760,1198 782,1212 806,1240 818,1262 805,1262 818,1315 798,1356 818,1392 860,1425 866,1475 880,1485 905,1490 910,1500 928,1498 925,1530 950,1555 900,1568'],
  ['A', '207,886 190,895 183,905 187,935 178,965 145,970 140,945 123,920 100,970 108,1010 110,1040 118,1047 105,1055 80,1060 75,1105 62,1112 60,1135 35,1160'],
  ['A', '60,1137 110,1136 170,1146 200,1155 208,1155 207,1180 210,1220 240,1260 275,1305 300,1380 302,1408 335,1440 355,1470 340,1485 350,1490 352,1510 362,1512 360,1568'],
  ['A', '208,1152 235,1132 260,1125 318,1122 355,1160 388,1185 425,1125 480,1110 540,1108 588,1078'],
  ['A', '388,1185 405,1200 450,1225 455,1250 520,1265 520,1290 490,1302 487,1350 445,1385 435,1390 452,1420 490,1440 488,1475 520,1478 530,1500 552,1510 545,1540 520,1545 515,1562'],
  ['A', '35,1365 85,1372 95,1380 130,1372 153,1370 165,1410 185,1445 205,1455 240,1492 270,1525 330,1510 355,1498 400,1478 450,1466 488,1478'],
  ['A', '522,1467 550,1410 595,1380 640,1372 700,1352 735,1315 775,1322 818,1315'],
  ['A', '989,747 985,780 960,808 928,811 960,822 985,850 985,870 955,930 950,980 955,1040 968,1065 970,1100 985,1120 985,1165 968,1170 966,1205 1000,1222 1020,1235 1065,1232 1125,1232 1102,1187 1143,1172 1175,1205 1200,1215 1225,1240 1235,1300 1235,1345 1260,1392 1320,1415 1357,1420 1360,1455 1395,1495 1395,1508'],
  ['A', '806,1262 860,1255 885,1267 945,1258 950,1245 1000,1235 1000,1222'],
  ['A', '1235,1300 1290,1295 1350,1270 1357,1283 1400,1262 1445,1245 1455,1210 1480,1205 1482,1170 1520,1160 1535,1110 1530,1070 1545,1050 1520,1045 1510,1010 1530,990 1568,965'],
  ['A', '1290,1605 1305,1568 1330,1535 1350,1510 1395,1508 1450,1498 1520,1482 1568,1483'],
  ['B', '82,768 110,810 130,850 137,900 133,925 145,945 150,1000 135,1050 135,1085 147,1125 165,1130 200,1172 255,1152 310,1148 302,1170 310,1195 335,1230 290,1285 285,1312 260,1325 240,1380 220,1400 205,1470 197,1522'],
  ['B', '133,925 92,958'],
  ['B', '92,1484 140,1505 195,1522 240,1530 275,1568'],
  ['C', '879,36 885,80 905,125 930,137 970,130 985,134'],
  ['C', thamesLine],
  ['C', '190,16 183,40 192,70 187,110 205,150 210,200 228,250 235,300 213,350 220,390 240,450 255,520 270,540 200,525 185,527 165,575 150,590 107,587 125,540 125,460 120,420 105,370 95,300 88,270 115,220 140,165'],
  ['C', '380,108 350,112 330,130 325,240 350,290 348,360 312,370 305,440 285,465 280,500 268,540'],
  ['C', '280,500 340,515 355,505 372,525 408,500 412,550 430,570 455,560 480,520 500,490 530,478 552,510 555,480 520,430 525,400 510,390 500,345 500,320 485,265 480,235 495,215 470,225 420,230 413,250 400,210 405,180 395,160'],
  ['C', '530,390 565,420 575,450 615,500 645,455 660,410 675,360 668,300 653,290 665,230 690,205 720,195 757,187 755,100 748,0'],
  ['C', '645,455 665,480 700,535 740,558 790,548 835,583'],
  ['C', '268,540 280,560 285,600 310,650 335,650 345,690 375,720 378,785 395,785 403,770 410,850 455,910 467,1000 479,1060'],
  ['C', '18,522 45,540 65,530 110,560'],
  ['C', '150,590 145,640 158,670 140,715 60,735 35,705 18,740'],
  ['C', '140,715 155,780 160,830 170,900 182,975 155,970 118,995 108,1030 118,1080 105,1115 85,1120'],
  ['C', '18,95 65,68 75,110 95,168']
];

const points = {
  c: [
    ['A', '742,124 399,194 419,241 577,185 605,214 733,214 681,249 703,243 580,266 726,291 63,331 720,361 678,379 769,384 605,425 629,431 740,443 717,482 757,485 558,499 492,518 683,507 601,543 607,563 438,559 706,579 338,608 543,606 639,615 348,637 320,664 570,647 703,647 188,664 102,667 63,590 590,694 529,702 524,706 612,717 167,712 102,721 264,709 551,747 637,743 423,753 519,759 156,755 477,790 514,794 259,785 50,778 583,823 592,827 382,833 585,860 431,855 480,866 147,843 215,863 272,861 63,895 490,899 281,911 590,919 355,930 536,937 144,936 222,945 506,947 424,957 565,971 487,973 132,974 325,981 536,990 66,990 428,1000 205,1011 293,1015 562,1025 147,1033 607,1042 556,1051 433,1049 490,1062 306,1062 340,1079 397,1079 564,1075 134,1093 473,1102 484,1107 575,1099 269,1111 287,1126 448,1122 492,1143 526,1145 570,1149 370,1155 629,1161 289,1169 345,1182 408,1180 573,1169 634,1186 529,1198 188,1194 211,1190 399,1196 489,1183 258,1209 335,1208 313,1221 338,1223 406,1212 482,1225 575,1223 614,1227 649,1235 668,1239 703,1227 448,1252 155,1252 218,1254 264,1254 489,1246 541,1256 526,1258 711,1254 726,1250 115,1265 167,1277 382,1271 489,1269 536,1283 162,1300 249,1286 279,1293 273,1300 653,1300 681,1300 771,1300 303,1315 387,1315 406,1314 592,1326 363,1340 556,1347 662,1335 200,1347 460,1353 159,1356 607,1359 678,1361 40,1361 72,1382 73,1401 232,1380 348,1378 482,1378 504,1384 536,1388 455,1390 418,1392 578,1382 635,1382 711,1386 726,1401 262,1395 325,1399 295,1423 215,1432 385,1427 416,1423 561,1413 592,1419 534,1434 663,1409 649,1434 614,1441 575,1446 759,1419 784,1432 833,1419 355,1463 448,1467 614,1456 588,1465 651,1481 715,1466 720,1486 718,1498 809,1458 842,1450 842,1481 779,1492 588,1502 585,1517 614,1519 681,1512 642,1535 824,1512 759,1535 865,1532 815,1521'],
    ['A', '938,772 813,773 769,839 833,862 895,887 926,895 855,901 882,952 769,988 769,1011 744,1053 695,1066 864,1056 747,1085 771,1087 720,1099 909,1115 938,1159 850,1167 877,1182 973,1173 933,1236 904,1239 938,1270 906,1279 985,1288 872,1357 938,1382 949,1393 933,1434 938,1459 975,1322 1041,1330 1002,1401 1043,1388 1045,1393 1034,1450 1015,1463 1004,1488 993,1512 1038,1492 1075,1465 1090,1500 1112,1520 1127,1490 1127,1432 1122,1450 1093,1432 1119,1401 1112,1365 1087,1345 1083,1330 1102,1311 1112,1293 1068,1289 1046,1252 1038,1258 1129,1265 1145,1263 1169,1254 1203,1258 1164,1287 1177,1314 1161,1345 1188,1351 1203,1378 1200,1415 1186,1477 1210,1522 1244,1504 1018,825 987,856 1100,887 1156,905 998,946 1012,951 1041,983 1053,986 1007,1032 1058,1033 1065,1172 1166,1147 1171,1124 1144,1056 1174,967 1230,959 1200,1007 1281,930 1279,986 1279,1029 1237,1062 1310,1089 1376,1069 1310,875 1376,864 1411,889 1438,843 1478,775 1139,769 1166,699 1205,647 1141,592 1293,534 1455,606 1271,1165 1291,1198 1323,1217 1264,1229 1308,1265 1252,1275 1269,1318 1299,1376 1345,1351 1374,1205 1418,1211 1396,1306 1423,1109 1448,1124 1457,1165 1491,1130 1482,1064 1521,1176 1543,1200 1472,1211 1557,1244 1520,1258 1469,1351 1528,1345 1555,1017 1501,1516 1460,1532 1505,1549'],
    ['B', '206,647 206,906 170,973 250,994 346,1023 465,1013 536,1007 527,1048 399,1064 403,898 470,902 511,887 559,920 483,848 112,1079 102,1109 212,1089 364,1101 429,1115 426,1122 676,1101 706,1194 270,1161 344,1167 170,1190 108,1194 131,1219 399,1215 396,1246 500,1217 463,1242 550,1234 440,1281 401,1297 156,1265 181,1267 128,1293 250,1301 344,1318 341,1350 339,1357 102,1332 133,1338 165,1376 238,1343 220,1392 252,1392 431,1415 366,1446 408,1483 780,833 827,870 900,785 1038,1075 788,1477 749,1537'],
    ['C', '515,40 568,43 292,40 683,53 725,76 740,90 655,90 265,62 247,63 327,70 394,76 254,95 312,103 387,95 430,95 480,100 177,110 227,115 333,118 247,115 575,122 583,114 603,123 557,136 207,132 220,145 167,140 182,155 267,160 287,151 352,151 362,142 322,157 405,142 491,149 521,153 450,158 658,135 673,128 686,128 698,143 730,138 635,133 627,153 782,93 791,95 735,37 842,100 1132,10 1091,45 1172,97 782,171 813,207 924,206 1021,255 1019,314 953,351 978,428 1063,419 886,448 175,180 217,173 383,175 425,172 22,172 318,183 505,184 517,179 546,193 533,198 613,184 637,186 667,175 677,187 685,180 147,200 217,205 237,200 333,215 362,202 265,218 73,231 145,235 140,248 222,237 240,245 337,240 378,240 386,231 394,243 421,240 535,236 106,253 168,269 200,251 29,264 73,263 83,257 283,264 303,278 254,274 328,258 469,260 502,271 512,286 360,277 562,277 609,278 591,300 545,309 559,320 30,302 87,290 121,286 195,297 210,308 245,313 345,303 370,320 390,326 468,342 480,333 447,347 278,346 167,318 140,327 117,351 135,352 178,353 292,362 363,362 323,378 401,370 93,378 149,378 220,387 315,397 353,397 379,410 411,398 458,397 495,387 520,385 551,386 630,406 110,402 181,412 176,427 179,448 57,446 309,437 347,437 362,426 307,464 402,452 454,433 476,448 510,428 568,434 599,443 236,470 257,470 22,485 38,481 168,490 358,472 373,486 403,481 462,483 543,478 497,492 470,505 614,479 637,492 615,517 638,542 657,428 669,355 708,278 718,302 767,296 792,273 835,315 789,346 716,402 719,450 681,457 776,456 733,516 49,526 86,532 102,534 195,521 240,500 241,543 82,547 262,528 30,561 115,578 213,568 45,607 57,614 92,587 79,592 97,607 22,621 67,625 131,587 149,601 134,604 188,596 260,608 349,620 405,597 430,625 538,630 138,649 118,672 60,682 265,694 207,740 283,743 179,767 345,703 366,748 607,707 712,687 755,794 906,541 917,654 894,678 863,716 27,756 77,773 82,789 46,800 42,818 249,828 218,863 112,845 150,881 130,906 137,918 150,939 248,904 233,931 40,944 261,974 355,933 372,948 377,975 343,1008 281,1042 610,1010 909,1019 805,1050 130,1073 175,1079 57,1084 120,1137 207,1144 262,1148 306,1132 185,1217 542,1281 262,1268 138,1468 105,1471 462,1445']
  ],
  g: [
    ['A', '289,99 142,253 318,262 613,181 727,179 634,245 688,313 732,335 406,457 683,453 575,476 443,524 480,557 500,565 652,565 686,625 664,655 134,619 257,694 257,726 220,728 394,719 90,684 84,755 61,765 610,752 546,775 293,802 123,843 178,847 218,850 370,877 560,877 235,901 183,922 551,927 325,967 162,992 66,1015 162,1046 328,1043 375,1043 416,1043 443,1060 470,1081 531,1097 352,1113 303,1112 311,1108 154,1128 548,1128 534,1130 200,1161 333,1173 303,1188 244,1200 497,1196 404,1225 424,1235 590,1217 508,1258 83,1273 127,1275 343,1279 218,1285 198,1289 508,1294 514,1314 539,1312 654,1287 713,1303 186,1324 409,1349 654,1341 102,1340 227,1357 340,1359 318,1371 580,1359 392,1386 652,1388 637,1407 245,1402 255,1413 195,1409 491,1405 509,1421 363,1423 453,1434 409,1446 558,1448 725,1437 811,1419 573,1467 333,1465 362,1476 93,1463 91,1475 107,1481 101,1505 156,1493 225,1483 553,1483 646,1515 308,1505 323,1522 526,1516 556,1522 585,1540 765,1483 820,1493 809,1534 250,1536 171,1557 637,1565 700,1562 899,732 891,749 1002,829 1046,740 896,346 980,361 961,389 1041,342 983,524 1291,577 1291,602 850,1007 876,1048 710,1042 747,1112 815,1149 786,1171 1011,1077 989,1104 931,1281 988,1272 952,1353 1021,1327 1085,1378 1183,1392 1188,1269 975,1508 1281,967 1313,969 1255,1058 1323,1205 1271,1349 1279,1363 1435,1450 1510,1077 1494,1190 1510,1254 1490,1531 1460,1557'],
    ['B', '284,792 405,877 183,944 275,1019 283,1023 254,1058 360,1149 600,1196 124,1235 167,1326 131,1371 376,1328 346,1423 665,581 843,726 674,775 1034,895 1107,1232 1153,1495 767,1527'],
    ['C', '318,34 351,67 223,57 217,68 200,65 285,73 289,83 267,107 327,98 195,93 133,92 124,105 110,101 95,100 70,116 59,122 50,122 39,137 84,134 132,142 53,165 107,158 186,123 240,130 251,138 223,127 228,155 213,153 163,160 165,172 397,118 440,122 469,133 469,143 708,102 775,80 727,45 729,28 622,132 663,125 642,153 618,167 148,185 156,195 175,206 203,196 213,195 248,187 292,187 192,213 99,213 116,213 393,188 425,187 362,217 395,237 303,253 465,242 523,181 604,233 49,258 48,271 79,262 157,261 180,268 97,290 217,286 187,300 121,315 282,286 355,308 365,306 432,299 469,299 421,327 531,294 566,284 614,330 596,341 754,231 712,261 754,268 797,244 853,179 674,291 878,315 962,321 1024,324 968,352 1098,374 201,340 246,354 60,345 169,383 110,383 74,385 165,402 128,400 282,364 327,367 327,425 362,394 418,399 333,434 323,446 79,414 75,455 202,476 218,501 50,486 73,485 58,506 130,504 153,518 118,536 140,549 218,528 219,535 326,472 357,482 432,480 421,509 487,493 683,361 748,516 250,585 294,591 318,596 73,638 54,665 941,587 890,638 874,663 761,653 548,627 20,725 345,811 197,836 57,860 58,870 78,868 109,851 68,928 154,917 207,929 332,963 176,987 199,993 996,791 171,1196 266,1267 386,1305 189,1369 302,1394 729,1167 836,1287 789,1369 646,1391 458,1447 527,1486']
  ],
  b: [
    ['A', '588,178 840,666 825,821 906,800 769,887 570,909 575,929 600,957 320,938 333,955 384,979 553,1015 462,1031 472,1070 583,1194 592,1283 404,1334 436,1347 279,1367 63,1445 717,957 757,947 820,953 872,996 722,988 786,1106 889,1099 759,1138 802,1163 789,1167 744,1382 872,1510 741,1510 1298,759 1320,1009 1332,1149 1188,1237 1050,1363 987,1442 1058,1518 1462,1273 1421,1405 667,702'],
    ['B', '193,850 270,940 477,853 538,846 477,1157 610,1200 763,668 836,711 906,695 820,1405 725,1510 788,1508 626,1518 978,1562'],
    ['C', '364,57 180,70 135,128 115,153 263,186 296,207 306,228 398,198 36,213 118,228 270,297 57,330 165,332 244,362 759,67 804,107 839,102 818,148 878,175 743,200 839,203 707,235 771,244 901,215 853,227 877,228 830,236 822,288 865,299 889,310 698,361 731,363 771,393 804,398 705,417 713,419 1027,125 1137,169 1220,72 1254,33 1049,368 1060,371 1018,382 918,372 941,461 892,473 568,475 587,470 570,503 638,528 641,577 349,530 317,557 327,566 349,575 343,582 397,556 422,559 498,553 526,576 537,581 713,576 736,596 677,607 477,607 369,625 320,632 205,622 218,601 224,603 222,633 47,650 130,650 183,663 289,661 164,689 197,686 239,680 284,682 307,690 353,684 413,696 467,669 473,664 491,650 543,677 722,646 771,687 745,711 884,624 628,704 697,733 748,740 745,756 653,742 660,747 215,705 240,720 241,730 266,731 291,718 479,728 167,733 32,733 232,777 246,785 405,763 453,784 524,771 576,754 140,820 61,842 363,825 393,822 496,849 547,871 625,844 662,840 691,835 692,870 650,882 693,917 200,889 233,897 404,915 424,913 436,949 449,988 466,1030 218,1090 288,1074 160,1167 193,1154 79,1151 274,1194 354,1166 300,1267 254,1318 534,1137 571,1143 607,1139 91,1502']
  ],
  p: [
    ['A', '646,524 658,600 659,700 619,864 551,891 144,985 81,1044 242,1134 561,1177 771,935 820,1023 522,1351 254,1361 717,1455 88,1501 1359,1119 1445,1423'],
    ['B', '555,839'],
    ['C', '422,129 120,145 301,181 274,224 276,268 350,259 322,320 231,348 80,435 64,507 395,649 190,694 507,654 753,521 1172,139']
  ]
};

const places = [
  ['A', 1401, 278, 'Epping'], ['A', 709, 374, 'Waltham Cross'], ['A', 482, 602, 'Enfield', 1], ['A', 1146, 630, 'Loughton'],
  ['A', 1085, 752, 'Buckhurst Hill'], ['A', 350, 968, 'Wood Green', 1], ['A', 122, 1026, 'Finchley', 1], ['A', 797, 1040, 'Walthamstow', 1],
  ['A', 1250, 1204, 'Ilford', 1], ['A', 655, 1320, 'Hackney', 1], ['A', 905, 1330, 'Stratford', 1], ['A', 215, 1333, 'Camden Town', 1],
  ['A', 460, 1505, 'CITY OF LONDON', 1, 18], ['C', 141, 33, 'LONDON', 1, 23], ['C', 122, 93, 'WESTMINSTER', 1, 16],
  ['B', 553, 185, 'Chipping Ongar'], ['B', 1200, 420, 'Ingatestone'], ['B', 1368, 693, 'Billericay'], ['B', 832, 767, 'Brentwood'],
  ['B', 295, 1075, 'Romford', 1], ['B', 1413, 1423, 'Stanford-le-'], ['B', 1413, 1458, 'Hope'], ['B', 770, 1486, 'South'], ['B', 770, 1521, 'Ockendon'],
  ['C', 443, 167, 'Greenwich', 1], ['C', 607, 158, 'Woolwich', 1], ['C', 890, 93, 'River Thames', 1, 12], ['C', 818, 261, 'Bexleyheath', 1],
  ['C', 430, 283, 'Lewisham', 1], ['C', 485, 318, 'Lee', 1], ['C', 590, 345, 'Eltham', 1], ['C', 408, 384, 'Catford', 1],
  ['C', 139, 486, 'Streatham', 1], ['C', 333, 497, 'Sydenham', 1], ['C', 708, 483, 'Sidcup', 1], ['C', 750, 525, 'Foots Cray', 1],
  ['C', 505, 630, 'Bromley', 1], ['C', 725, 750, 'Orpington', 1], ['C', 218, 826, 'Croydon', 1], ['C', 130, 1128, 'Coulsdon', 1],
  ['C', 553, 1132, 'Biggin Hill', 1], ['C', 337, 1181, 'Warlingham'], ['C', 287, 1344, 'Caterham'], ['C', 651, 1415, 'Westerham'],
  ['C', 468, 1485, 'Oxted'], ['C', 947, 1376, 'Sevenoaks'], ['C', 1480, 1213, 'West Malling'], ['C', 1525, 1010, 'Snodland'],
  ['C', 900, 655, 'Swanley'], ['C', 992, 365, 'Dartford'], ['C', 1272, 358, 'Northfleet'], ['C', 1366, 360, 'Gravesend'],
  ['C', 1245, 157, 'Grays'], ['C', 1348, 239, 'Tilbury'], ['C', 1522, 160, 'River Thames', 0, 12]
];

const fills = { c: '#40dfec', g: '#c79f2b', b: '#4464e6', p: '#e0408f' };
const poly = 'M' + outline.map(p => p.join(' ')).join('L') + 'Z';
const thamesOut = 'M2530 1100Q2570 1115 2600 1150Q2640 1200 2672 1196Q2700 1190 2712 1165Q2735 1145 2752 1165Q2775 1215 2812 1214Q2880 1222 2950 1200Q2985 1185 2995 1140Q3005 1090 3022 1040';
const roads = ['M2366 309L2384 390Q2370 440 2340 490Q2250 530 2170 512L2090 510', 'M2340 490Q2440 520 2545 640Q2590 700 2620 740Q2700 900 2650 1040', 'M2340 560Q2500 560 2560 420Q2600 340 2680 309', 'M2620 700Q2780 620 2870 450Q2940 380 3022 330', 'M1810 1720Q1900 1860 2120 1830Q2300 1800 2420 1690L2700 1670L3022 1660', 'M2420 1400Q2550 1400 2620 1500Q2700 1640 2900 1650', 'M2420 1400Q2460 1560 2420 1740', 'M1900 1900Q2060 1780 2210 1790Q2380 1760 2440 1680', 'M2640 820Q2830 760 3022 720', 'M2560 1280Q2700 1260 3022 1320'];

let out = '<defs><filter id="soft" x="-10%" y="-10%" width="120%" height="120%"><feGaussianBlur stdDeviation="4"/></filter>' +
  `<clipPath id="land"><path d="${poly}"/></clipPath></defs>`;
out += roads.map(d => `<path d="${d}" fill="none" stroke="#f4f6f6" stroke-width="5"/><path d="${d}" fill="none" stroke="#fff" stroke-width="3"/>`).join('');
out += `<path d="${thamesOut}" fill="none" stroke="#eff2f2" stroke-width="30" stroke-linejoin="round"/>`;
out += `<path d="${poly}" fill="none" stroke="#e2deea" stroke-width="46" stroke-linejoin="round" opacity=".85" filter="url(#soft)"/>`;
out += `<path d="${poly}" fill="#ebd181"/>`;
out += '<g clip-path="url(#land)" fill="none" stroke="#dcc47a" stroke-linejoin="round">';
out += `<path d="${path('A', '1290,1568 1320,1525 1350,1506 1395,1505 1450,1488 1520,1470 1600,1475')}" stroke-width="14"/>`;
out += `<path d="${path('B', '60,1475 140,1498 195,1518 240,1526 290,1570')}" stroke-width="18"/>`;
out += `<path d="${path('C', '875,20 890,80 910,120 940,125 1000,150')}" stroke-width="24"/>`;
out += `<path d="${path('C', thamesLine)}" stroke-width="8"/>`;
out += `<path d="${path('A', '780,525 818,530 820,600 800,680 750,668z')}" fill="#dcc47a" stroke="none"/><path d="${path('A', '735,680 800,690 770,760 722,810z')}" fill="#dcc47a" stroke="none"/>`;
out += '<g stroke="#e6cc7c" stroke-width="2"><path d="M1780 800Q1900 700 2060 720T2340 760T2700 780M1800 400Q1850 700 1960 1040T1850 1500M1960 1040Q2200 900 2400 820T2640 760M1960 1060Q2200 1200 2560 1120M1980 1060Q2150 1300 2400 1500M2060 460Q2040 800 1960 1000"/></g></g>';
out += `<path d="${poly}" fill="none" stroke="#5e553a" stroke-width="1.6" stroke-linejoin="round"/>`;
out += boroughs.map(([k, s]) => `<path d="${path(k, s)}" fill="none" stroke="#3e381f" stroke-width="1.6" stroke-linejoin="round"/>`).join('');
out += places.map(([k, x, y, t, land, size]) => {
  const [px, py] = pts(k, x + ',' + y)[0];
  return `<text x="${px}" y="${py + 5}" text-anchor="middle" font-family="Open Sans" font-size="${size || 15}" letter-spacing=".8" fill="${land ? '#94803e' : '#a9b1c2'}" fill-opacity="${land ? .7 : .75}">${t}</text>`;
}).join('');
for (const k of ['c', 'g', 'b', 'p'])
  for (const [s, list] of points[k])
    out += pts(s, list).map(([x, y]) => `<circle cx="${x}" cy="${y}" r="4.300" fill="${fills[k]}" stroke="#66665e" stroke-width="1.500"/>`).join('');
out += '<circle cx="1411" cy="1769" r="4.300" fill="#40dfec" stroke="#66665e" stroke-width="1.500"/>';
document.getElementById('map').innerHTML = out;
```
